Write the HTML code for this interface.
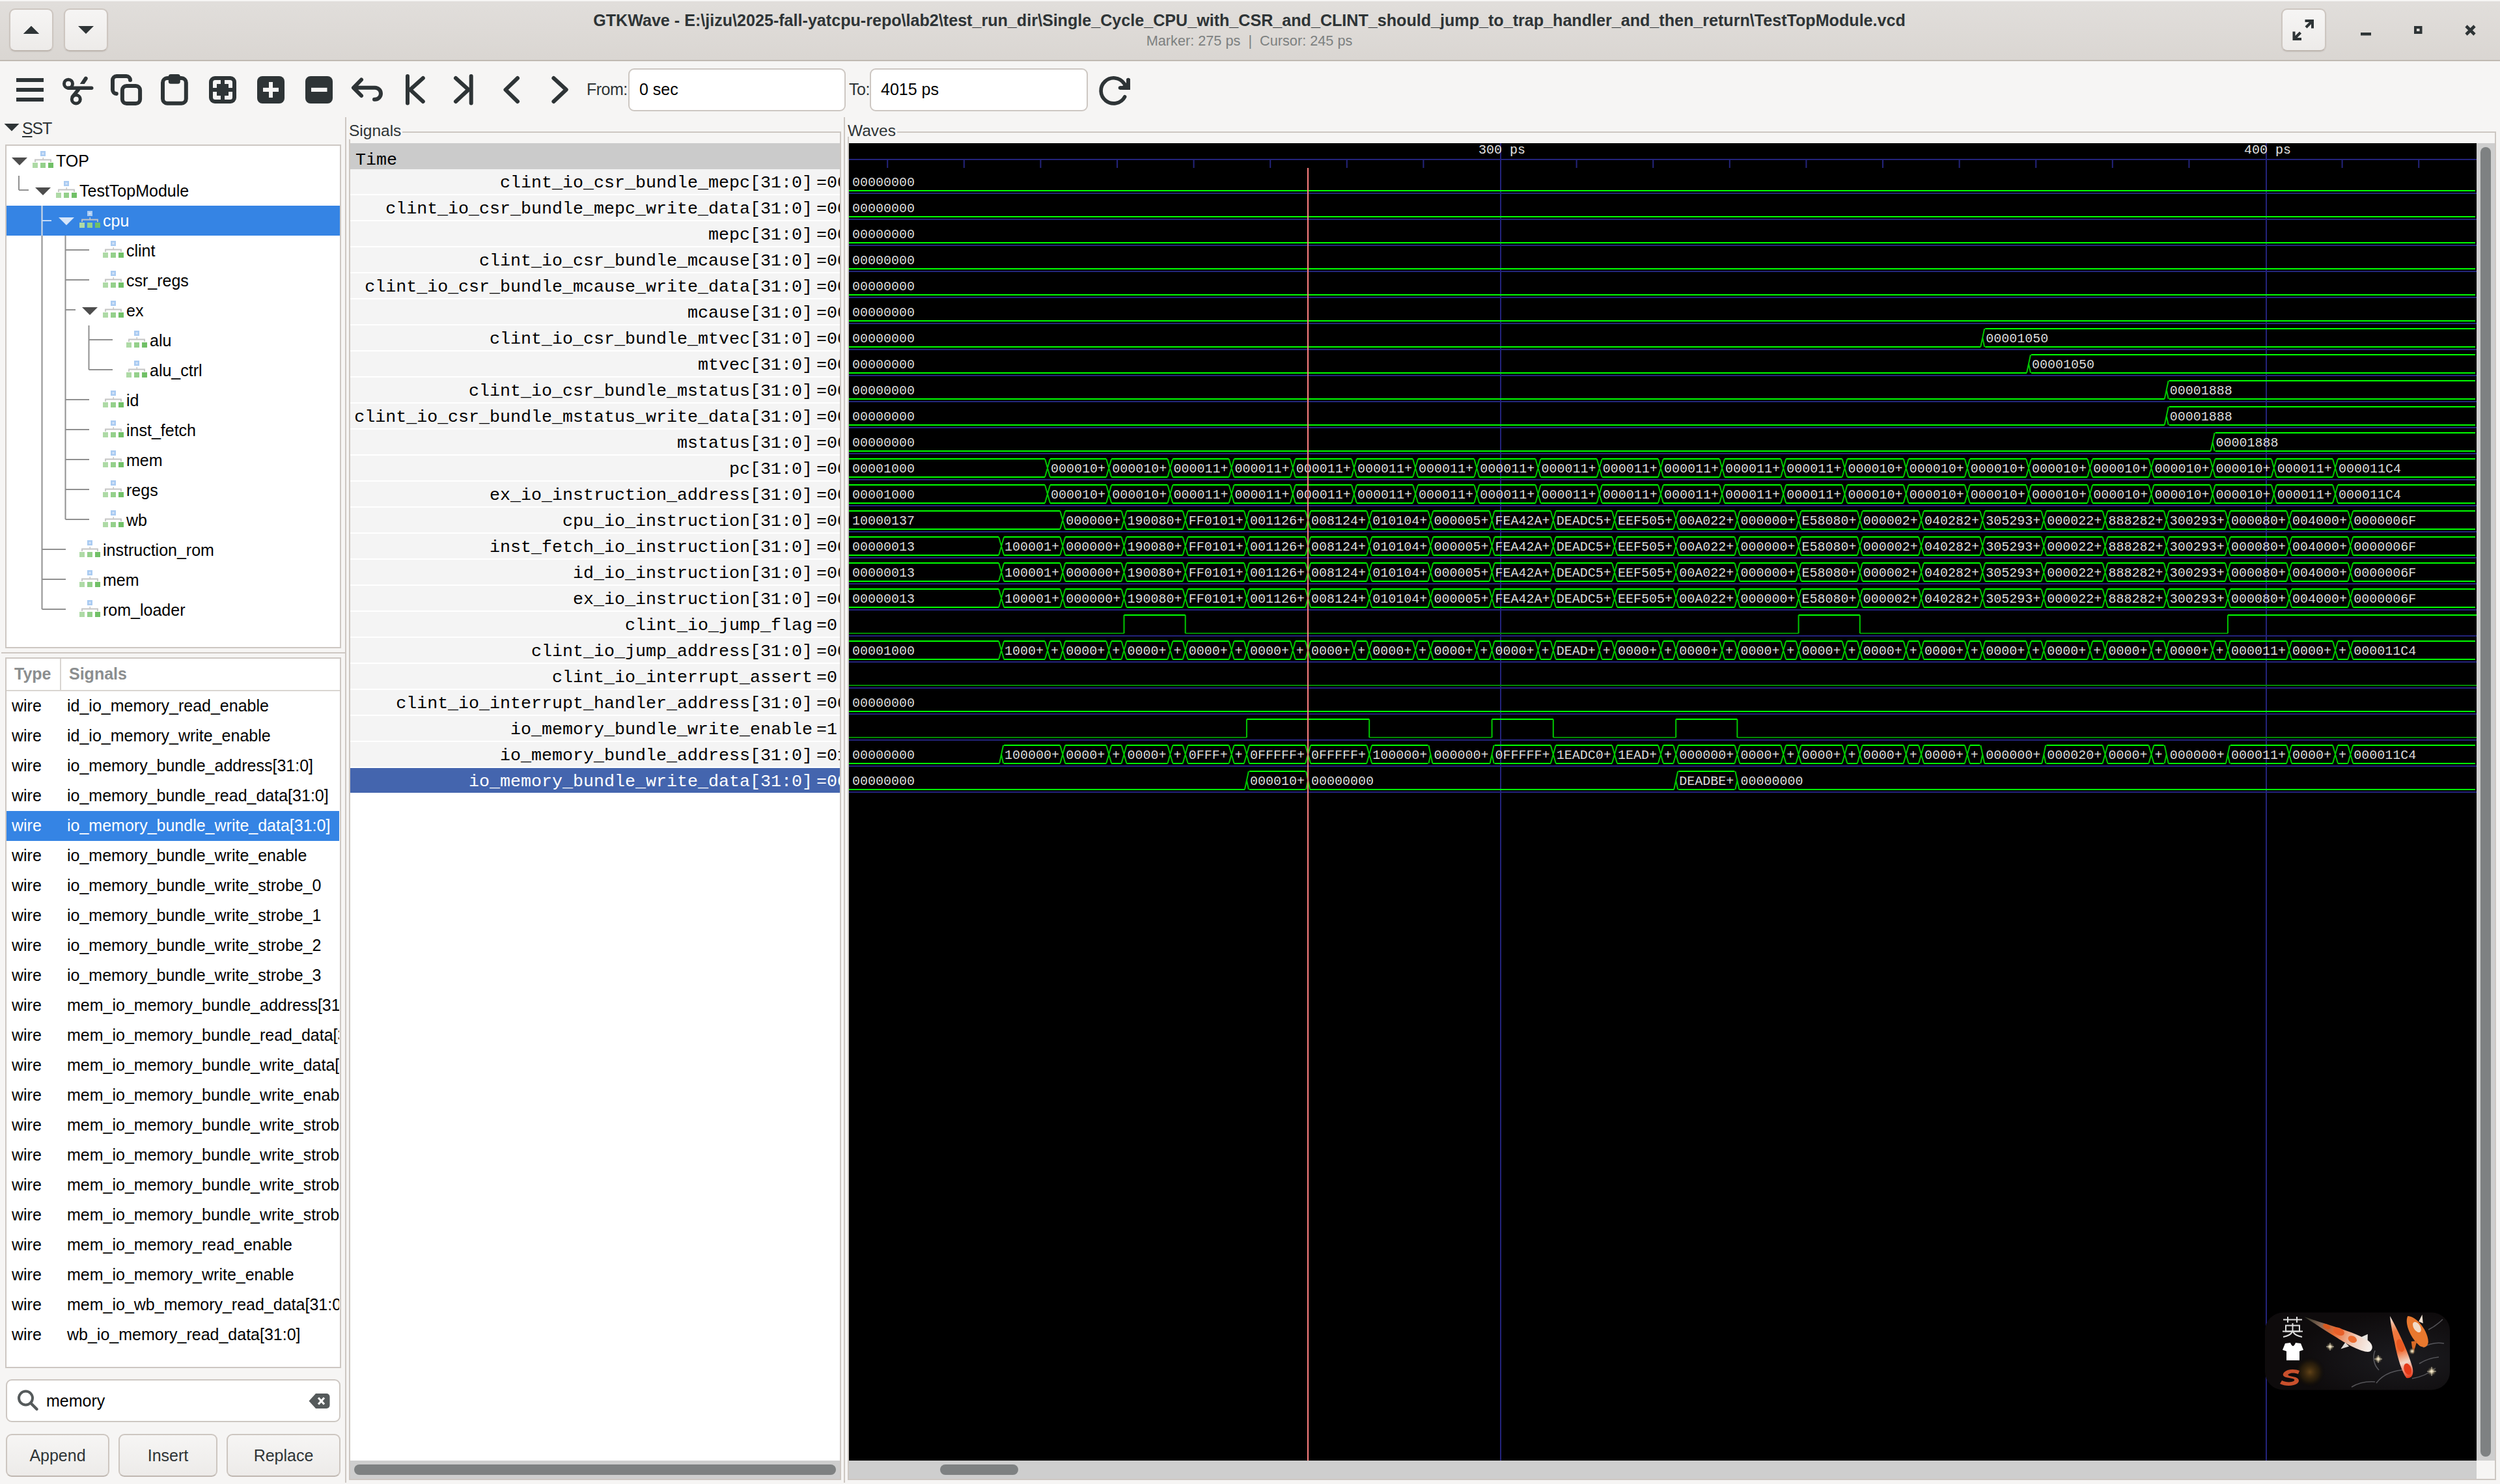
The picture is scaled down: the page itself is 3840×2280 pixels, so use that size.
<!DOCTYPE html>
<html><head><meta charset="utf-8"><title>GTKWave</title>
<style>
html,body{margin:0;padding:0;}
body{width:3840px;height:2280px;position:relative;overflow:hidden;background:#f6f5f4;font-family:"Liberation Sans",sans-serif;}
</style></head><body>
<div style="position:absolute;left:0;top:0;width:3840px;height:2px;background:#f6f5f4"></div>
<div style="position:absolute;left:0;top:2px;width:3840px;height:90px;background:linear-gradient(#e1dedb,#dad6d2)"></div>
<div style="position:absolute;left:0;top:92px;width:3840px;height:2px;background:#c0b9b2"></div>
<div style="position:absolute;left:14px;top:13px;width:64px;height:62px;border:2px solid #cdc6c0;border-bottom-color:#bfb7b0;border-radius:9px;background:linear-gradient(#f6f5f4,#edebe9);box-shadow:0 1px 2px rgba(0,0,0,0.07)"></div><svg style="position:absolute;left:0;top:0" width="200" height="94"><polygon points="36,52 60,52 48,40" fill="#2e3436"/><polygon points="120,40 144,40 132,52" fill="#2e3436"/></svg>
<div style="position:absolute;left:98px;top:13px;width:64px;height:62px;border:2px solid #cdc6c0;border-bottom-color:#bfb7b0;border-radius:9px;background:linear-gradient(#f6f5f4,#edebe9);box-shadow:0 1px 2px rgba(0,0,0,0.07)"></div>
<svg style="position:absolute;left:0;top:0" width="200" height="94"><polygon points="36,52 60,52 48,40" fill="#2e3436"/><polygon points="120,40 144,40 132,52" fill="#2e3436"/></svg>
<div style="position:absolute;left:0;top:16px;width:3838px;text-align:center;font:bold 25.12px/30px 'Liberation Sans',sans-serif;color:#2e3436;white-space:pre">GTKWave - E:\jizu\2025-fall-yatcpu-repo\lab2\test_run_dir\Single_Cycle_CPU_with_CSR_and_CLINT_should_jump_to_trap_handler_and_then_return\TestTopModule.vcd</div>
<div style="position:absolute;left:0;top:50px;width:3838px;text-align:center;font:21.7px/26px 'Liberation Sans',sans-serif;color:#7c8080;white-space:pre">Marker: 275 ps  |  Cursor: 245 ps</div>
<div style="position:absolute;left:3504px;top:13px;width:65px;height:62px;border:2px solid #cdc6c0;border-bottom-color:#bfb7b0;border-radius:9px;background:linear-gradient(#f6f5f4,#edebe9);box-shadow:0 1px 2px rgba(0,0,0,0.07)"></div>
<svg style="position:absolute;left:3480px;top:0" width="360" height="94">
<g fill="#2e3436">
<polygon points="60.5,30 74,30 74,43.5 70,43.5 70,37 63.5,43.5 60.5,40.5 67,34 60.5,34"/>
<polygon points="41.5,62 41.5,48.5 45.5,48.5 45.5,55 52,48.5 55,51.5 48.5,58 55,58 55,62"/>
<rect x="146" y="50" width="16" height="4.5"/>
<path d="M228 40h12.5v12h-12.5z M232 44v4h4.5v-4z" fill-rule="evenodd"/>
</g>
<path d="M308 40l13 13 M321 40l-13 13" stroke="#2e3436" stroke-width="4.6" stroke-linecap="butt"/>
</svg>
<svg style="position:absolute;left:0;top:94px" width="1760" height="90" viewBox="0 94 1760 90">
<g fill="#2e3436">
<rect x="25" y="120" width="42" height="6"/><rect x="25" y="135" width="42" height="6"/><rect x="25" y="150" width="42" height="6"/>
</g>
<g fill="none" stroke="#2e3436" stroke-width="6" stroke-linecap="round" stroke-linejoin="round">
<circle cx="105" cy="128.7" r="6.5" stroke-width="5"/>
<circle cx="116.8" cy="152.5" r="6.5" stroke-width="5"/>
<path d="M105 135.2H140.7" stroke-width="5.5"/>
<path d="M122.7 128.9L129.7 128.9L134.6 121.8A3 3 0 0 0 129.6 118.6Z" fill="#2e3436" stroke="none"/>
<path d="M120.5 137.5L111.5 148.5" stroke-width="5.5"/>
<path d="M178.8 143.9A6 6 0 0 1 173 138V123A6 6 0 0 1 179 117H194A6 6 0 0 1 200 123"/>
<rect x="187.9" y="131.9" width="27.2" height="27.1" rx="6.5"/>
<rect x="250" y="120" width="35.8" height="38.8" rx="7"/>

<path d="M576 134.8a9 9 0 0 1 0 18 M544 134.8H576 M555 122.5L543 134.8L555 147 M576 152.8h-1" />
<path d="M626 117V158.6 M649.8 120L630 137.8L649.8 156"/>
<path d="M723.7 117V158.6 M700 120L719.5 137.8L700 156"/>
<path d="M795 120L776.5 137.8L795 156"/>
<path d="M850.4 120L869.7 137.8L850.4 156"/>
</g>
<g fill="#2e3436">
<rect x="258.8" y="114" width="18" height="14.8" rx="3.5"/>
<rect x="335" y="134.8" width="14" height="6"/>
<rect x="338.5" y="127.5" width="7" height="22"/>
<rect x="395" y="117" width="42" height="42" rx="8"/>
<rect x="469" y="117" width="42" height="42" rx="8"/>
</g>
<rect x="321" y="117" width="42" height="42" rx="9" fill="#2e3436"/>
<g fill="#f6f5f4">
<rect x="404" y="134.8" width="24" height="6.2"/><rect x="413" y="126" width="6" height="24"/>
<rect x="478" y="134.8" width="24.5" height="6.2"/>
<rect x="327" y="123" width="30" height="30" rx="3.5"/>
</g>
<g fill="#2e3436"><rect x="339" y="123" width="6" height="30"/><rect x="327" y="135" width="30" height="6"/><rect x="333" y="129" width="18" height="18"/></g>
<path d="M1726.7 128.4A19.5 19.5 0 1 0 1727.6 148.8" fill="none" stroke="#2e3436" stroke-width="5.6" stroke-linecap="round"/>
<path d="M1733 122.5V135H1720.5" fill="none" stroke="#2e3436" stroke-width="5.6" stroke-linecap="round"/>
<polygon points="1729.5,127.6 1735.8,127.6 1735.8,137.7 1724,137.7 1724,132.1" fill="#2e3436"/>
<rect x="1730.2" y="121" width="5.6" height="16.7" fill="#2e3436"/><rect x="1720" y="132.1" width="15.8" height="5.6" fill="#2e3436"/>
</svg>
<div style="position:absolute;left:901px;top:122px;font:25px/30px 'Liberation Sans',sans-serif;color:#2e3436;letter-spacing:-0.5px">From:</div>
<div style="position:absolute;left:965px;top:105px;width:330px;height:62px;border:2px solid #cdc7c2;border-radius:9px;background:#fff"></div>
<div style="position:absolute;left:982px;top:122px;font:25px/30px 'Liberation Sans',sans-serif;color:#000">0 sec</div>
<div style="position:absolute;left:1304px;top:122px;font:25px/30px 'Liberation Sans',sans-serif;color:#2e3436;letter-spacing:-0.5px">To:</div>
<div style="position:absolute;left:1336px;top:105px;width:331px;height:62px;border:2px solid #cdc7c2;border-radius:9px;background:#fff"></div>
<div style="position:absolute;left:1353px;top:122px;font:25px/30px 'Liberation Sans',sans-serif;color:#000">4015 ps</div>
<svg style="position:absolute;left:0;top:180px" width="40" height="40"><polygon points="6.5,10 29.5,10 18,21.6" fill="#2e3436"/></svg>
<div style="position:absolute;left:34px;top:182px;font:25px/30px 'Liberation Sans',sans-serif;color:#2e3436;letter-spacing:-1.2px"><u style="text-decoration-thickness:2px;text-underline-offset:3px">S</u>ST</div>
<div style="position:absolute;left:8px;top:222px;width:512px;height:770px;border:2px solid #cdc7c2;background:#fff"></div>
<div style="position:absolute;left:10px;top:316px;width:512px;height:46px;background:#3584e4"></div>
<svg style="position:absolute;left:0;top:0" width="530" height="1000">
<rect x="28" y="270" width="2" height="22" fill="#909090"/>
<rect x="29" y="291" width="15" height="2" fill="#909090"/>
<rect x="63.5" y="316" width="2" height="620" fill="#909090"/>
<rect x="64.5" y="338" width="14.5" height="2" fill="#c4dbf7"/>
<rect x="63.5" y="316" width="2" height="46" fill="#c4dbf7"/>
<rect x="64.5" y="843" width="36.5" height="2" fill="#909090"/>
<rect x="64.5" y="889" width="36.5" height="2" fill="#909090"/>
<rect x="64.5" y="935" width="36.5" height="2" fill="#909090"/>
<rect x="99.5" y="362" width="2" height="436" fill="#909090"/>
<rect x="100.5" y="383" width="36.5" height="2" fill="#909090"/>
<rect x="100.5" y="429" width="36.5" height="2" fill="#909090"/>
<rect x="100.5" y="613" width="36.5" height="2" fill="#909090"/>
<rect x="100.5" y="659" width="36.5" height="2" fill="#909090"/>
<rect x="100.5" y="705" width="36.5" height="2" fill="#909090"/>
<rect x="100.5" y="751" width="36.5" height="2" fill="#909090"/>
<rect x="100.5" y="797" width="36.5" height="2" fill="#909090"/>
<rect x="100.5" y="475" width="15.5" height="2" fill="#909090"/>
<rect x="135.5" y="500" width="2" height="68" fill="#909090"/>
<rect x="136.5" y="521" width="36.5" height="2" fill="#909090"/>
<rect x="136.5" y="567" width="36.5" height="2" fill="#909090"/>
<polygon points="18,242 42,242 30,254" fill="#4d4d4d"/>
<g transform="translate(50,232)"><rect x="12" y="0" width="8" height="8" fill="#a9cbf2"/><rect x="14.5" y="2.5" width="3" height="3" fill="#d5e4f8"/><rect x="15.5" y="10" width="1.5" height="3" fill="#c8c8c8"/><path d="M4 17V13.5H28V17" fill="none" stroke="#c4c4c4" stroke-width="1.8"/><rect x="0" y="18" width="8" height="8" fill="#aedaa6"/><rect x="12" y="18" width="8" height="8" fill="#94d08b"/><rect x="24" y="18" width="8" height="8" fill="#71c067"/></g>
<polygon points="54,288 78,288 66,300" fill="#4d4d4d"/>
<g transform="translate(86,278)"><rect x="12" y="0" width="8" height="8" fill="#a9cbf2"/><rect x="14.5" y="2.5" width="3" height="3" fill="#d5e4f8"/><rect x="15.5" y="10" width="1.5" height="3" fill="#c8c8c8"/><path d="M4 17V13.5H28V17" fill="none" stroke="#c4c4c4" stroke-width="1.8"/><rect x="0" y="18" width="8" height="8" fill="#aedaa6"/><rect x="12" y="18" width="8" height="8" fill="#94d08b"/><rect x="24" y="18" width="8" height="8" fill="#71c067"/></g>
<polygon points="90,334 114,334 102,346" fill="#d6e6fa"/>
<g transform="translate(122,324)"><rect x="12" y="0" width="8" height="8" fill="#a9cbf2"/><rect x="14.5" y="2.5" width="3" height="3" fill="#d5e4f8"/><rect x="15.5" y="10" width="1.5" height="3" fill="#c8c8c8"/><path d="M4 17V13.5H28V17" fill="none" stroke="#c4c4c4" stroke-width="1.8"/><rect x="0" y="18" width="8" height="8" fill="#aedaa6"/><rect x="12" y="18" width="8" height="8" fill="#94d08b"/><rect x="24" y="18" width="8" height="8" fill="#71c067"/></g>
<g transform="translate(158,370)"><rect x="12" y="0" width="8" height="8" fill="#a9cbf2"/><rect x="14.5" y="2.5" width="3" height="3" fill="#d5e4f8"/><rect x="15.5" y="10" width="1.5" height="3" fill="#c8c8c8"/><path d="M4 17V13.5H28V17" fill="none" stroke="#c4c4c4" stroke-width="1.8"/><rect x="0" y="18" width="8" height="8" fill="#aedaa6"/><rect x="12" y="18" width="8" height="8" fill="#94d08b"/><rect x="24" y="18" width="8" height="8" fill="#71c067"/></g>
<g transform="translate(158,416)"><rect x="12" y="0" width="8" height="8" fill="#a9cbf2"/><rect x="14.5" y="2.5" width="3" height="3" fill="#d5e4f8"/><rect x="15.5" y="10" width="1.5" height="3" fill="#c8c8c8"/><path d="M4 17V13.5H28V17" fill="none" stroke="#c4c4c4" stroke-width="1.8"/><rect x="0" y="18" width="8" height="8" fill="#aedaa6"/><rect x="12" y="18" width="8" height="8" fill="#94d08b"/><rect x="24" y="18" width="8" height="8" fill="#71c067"/></g>
<polygon points="126,472 150,472 138,484" fill="#4d4d4d"/>
<g transform="translate(158,462)"><rect x="12" y="0" width="8" height="8" fill="#a9cbf2"/><rect x="14.5" y="2.5" width="3" height="3" fill="#d5e4f8"/><rect x="15.5" y="10" width="1.5" height="3" fill="#c8c8c8"/><path d="M4 17V13.5H28V17" fill="none" stroke="#c4c4c4" stroke-width="1.8"/><rect x="0" y="18" width="8" height="8" fill="#aedaa6"/><rect x="12" y="18" width="8" height="8" fill="#94d08b"/><rect x="24" y="18" width="8" height="8" fill="#71c067"/></g>
<g transform="translate(194,508)"><rect x="12" y="0" width="8" height="8" fill="#a9cbf2"/><rect x="14.5" y="2.5" width="3" height="3" fill="#d5e4f8"/><rect x="15.5" y="10" width="1.5" height="3" fill="#c8c8c8"/><path d="M4 17V13.5H28V17" fill="none" stroke="#c4c4c4" stroke-width="1.8"/><rect x="0" y="18" width="8" height="8" fill="#aedaa6"/><rect x="12" y="18" width="8" height="8" fill="#94d08b"/><rect x="24" y="18" width="8" height="8" fill="#71c067"/></g>
<g transform="translate(194,554)"><rect x="12" y="0" width="8" height="8" fill="#a9cbf2"/><rect x="14.5" y="2.5" width="3" height="3" fill="#d5e4f8"/><rect x="15.5" y="10" width="1.5" height="3" fill="#c8c8c8"/><path d="M4 17V13.5H28V17" fill="none" stroke="#c4c4c4" stroke-width="1.8"/><rect x="0" y="18" width="8" height="8" fill="#aedaa6"/><rect x="12" y="18" width="8" height="8" fill="#94d08b"/><rect x="24" y="18" width="8" height="8" fill="#71c067"/></g>
<g transform="translate(158,600)"><rect x="12" y="0" width="8" height="8" fill="#a9cbf2"/><rect x="14.5" y="2.5" width="3" height="3" fill="#d5e4f8"/><rect x="15.5" y="10" width="1.5" height="3" fill="#c8c8c8"/><path d="M4 17V13.5H28V17" fill="none" stroke="#c4c4c4" stroke-width="1.8"/><rect x="0" y="18" width="8" height="8" fill="#aedaa6"/><rect x="12" y="18" width="8" height="8" fill="#94d08b"/><rect x="24" y="18" width="8" height="8" fill="#71c067"/></g>
<g transform="translate(158,646)"><rect x="12" y="0" width="8" height="8" fill="#a9cbf2"/><rect x="14.5" y="2.5" width="3" height="3" fill="#d5e4f8"/><rect x="15.5" y="10" width="1.5" height="3" fill="#c8c8c8"/><path d="M4 17V13.5H28V17" fill="none" stroke="#c4c4c4" stroke-width="1.8"/><rect x="0" y="18" width="8" height="8" fill="#aedaa6"/><rect x="12" y="18" width="8" height="8" fill="#94d08b"/><rect x="24" y="18" width="8" height="8" fill="#71c067"/></g>
<g transform="translate(158,692)"><rect x="12" y="0" width="8" height="8" fill="#a9cbf2"/><rect x="14.5" y="2.5" width="3" height="3" fill="#d5e4f8"/><rect x="15.5" y="10" width="1.5" height="3" fill="#c8c8c8"/><path d="M4 17V13.5H28V17" fill="none" stroke="#c4c4c4" stroke-width="1.8"/><rect x="0" y="18" width="8" height="8" fill="#aedaa6"/><rect x="12" y="18" width="8" height="8" fill="#94d08b"/><rect x="24" y="18" width="8" height="8" fill="#71c067"/></g>
<g transform="translate(158,738)"><rect x="12" y="0" width="8" height="8" fill="#a9cbf2"/><rect x="14.5" y="2.5" width="3" height="3" fill="#d5e4f8"/><rect x="15.5" y="10" width="1.5" height="3" fill="#c8c8c8"/><path d="M4 17V13.5H28V17" fill="none" stroke="#c4c4c4" stroke-width="1.8"/><rect x="0" y="18" width="8" height="8" fill="#aedaa6"/><rect x="12" y="18" width="8" height="8" fill="#94d08b"/><rect x="24" y="18" width="8" height="8" fill="#71c067"/></g>
<g transform="translate(158,784)"><rect x="12" y="0" width="8" height="8" fill="#a9cbf2"/><rect x="14.5" y="2.5" width="3" height="3" fill="#d5e4f8"/><rect x="15.5" y="10" width="1.5" height="3" fill="#c8c8c8"/><path d="M4 17V13.5H28V17" fill="none" stroke="#c4c4c4" stroke-width="1.8"/><rect x="0" y="18" width="8" height="8" fill="#aedaa6"/><rect x="12" y="18" width="8" height="8" fill="#94d08b"/><rect x="24" y="18" width="8" height="8" fill="#71c067"/></g>
<g transform="translate(122,830)"><rect x="12" y="0" width="8" height="8" fill="#a9cbf2"/><rect x="14.5" y="2.5" width="3" height="3" fill="#d5e4f8"/><rect x="15.5" y="10" width="1.5" height="3" fill="#c8c8c8"/><path d="M4 17V13.5H28V17" fill="none" stroke="#c4c4c4" stroke-width="1.8"/><rect x="0" y="18" width="8" height="8" fill="#aedaa6"/><rect x="12" y="18" width="8" height="8" fill="#94d08b"/><rect x="24" y="18" width="8" height="8" fill="#71c067"/></g>
<g transform="translate(122,876)"><rect x="12" y="0" width="8" height="8" fill="#a9cbf2"/><rect x="14.5" y="2.5" width="3" height="3" fill="#d5e4f8"/><rect x="15.5" y="10" width="1.5" height="3" fill="#c8c8c8"/><path d="M4 17V13.5H28V17" fill="none" stroke="#c4c4c4" stroke-width="1.8"/><rect x="0" y="18" width="8" height="8" fill="#aedaa6"/><rect x="12" y="18" width="8" height="8" fill="#94d08b"/><rect x="24" y="18" width="8" height="8" fill="#71c067"/></g>
<g transform="translate(122,922)"><rect x="12" y="0" width="8" height="8" fill="#a9cbf2"/><rect x="14.5" y="2.5" width="3" height="3" fill="#d5e4f8"/><rect x="15.5" y="10" width="1.5" height="3" fill="#c8c8c8"/><path d="M4 17V13.5H28V17" fill="none" stroke="#c4c4c4" stroke-width="1.8"/><rect x="0" y="18" width="8" height="8" fill="#aedaa6"/><rect x="12" y="18" width="8" height="8" fill="#94d08b"/><rect x="24" y="18" width="8" height="8" fill="#71c067"/></g>
</svg>
<div style="position:absolute;left:86px;top:232px;font:25px/30px 'Liberation Sans',sans-serif;color:#000000;white-space:pre">TOP</div>
<div style="position:absolute;left:122px;top:278px;font:25px/30px 'Liberation Sans',sans-serif;color:#000000;white-space:pre">TestTopModule</div>
<div style="position:absolute;left:158px;top:324px;font:25px/30px 'Liberation Sans',sans-serif;color:#ffffff;white-space:pre">cpu</div>
<div style="position:absolute;left:194px;top:370px;font:25px/30px 'Liberation Sans',sans-serif;color:#000000;white-space:pre">clint</div>
<div style="position:absolute;left:194px;top:416px;font:25px/30px 'Liberation Sans',sans-serif;color:#000000;white-space:pre">csr_regs</div>
<div style="position:absolute;left:194px;top:462px;font:25px/30px 'Liberation Sans',sans-serif;color:#000000;white-space:pre">ex</div>
<div style="position:absolute;left:230px;top:508px;font:25px/30px 'Liberation Sans',sans-serif;color:#000000;white-space:pre">alu</div>
<div style="position:absolute;left:230px;top:554px;font:25px/30px 'Liberation Sans',sans-serif;color:#000000;white-space:pre">alu_ctrl</div>
<div style="position:absolute;left:194px;top:600px;font:25px/30px 'Liberation Sans',sans-serif;color:#000000;white-space:pre">id</div>
<div style="position:absolute;left:194px;top:646px;font:25px/30px 'Liberation Sans',sans-serif;color:#000000;white-space:pre">inst_fetch</div>
<div style="position:absolute;left:194px;top:692px;font:25px/30px 'Liberation Sans',sans-serif;color:#000000;white-space:pre">mem</div>
<div style="position:absolute;left:194px;top:738px;font:25px/30px 'Liberation Sans',sans-serif;color:#000000;white-space:pre">regs</div>
<div style="position:absolute;left:194px;top:784px;font:25px/30px 'Liberation Sans',sans-serif;color:#000000;white-space:pre">wb</div>
<div style="position:absolute;left:158px;top:830px;font:25px/30px 'Liberation Sans',sans-serif;color:#000000;white-space:pre">instruction_rom</div>
<div style="position:absolute;left:158px;top:876px;font:25px/30px 'Liberation Sans',sans-serif;color:#000000;white-space:pre">mem</div>
<div style="position:absolute;left:158px;top:922px;font:25px/30px 'Liberation Sans',sans-serif;color:#000000;white-space:pre">rom_loader</div>
<div style="position:absolute;left:2px;top:1002px;width:528px;height:2px;background:#cdc7c2"></div>
<div style="position:absolute;left:8px;top:1010px;width:512px;height:1088px;border:2px solid #cdc7c2;background:#fff"></div>
<div style="position:absolute;left:92px;top:1012px;width:2px;height:48px;background:#d9d5d1"></div>
<div style="position:absolute;left:10px;top:1060px;width:512px;height:2px;background:#d9d5d1"></div>
<div style="position:absolute;left:22px;top:1020px;font:bold 25px/30px 'Liberation Sans',sans-serif;color:#8b8e8f">Type</div>
<div style="position:absolute;left:106px;top:1020px;font:bold 25px/30px 'Liberation Sans',sans-serif;color:#8b8e8f">Signals</div>
<div style="position:absolute;left:10px;top:1062px;width:511px;height:1036px;overflow:hidden">
<div style="position:absolute;left:0;top:184px;width:511px;height:46px;background:#3584e4"></div>
<div style="position:absolute;left:8px;top:7px;font:25px/30px 'Liberation Sans',sans-serif;color:#000000;white-space:pre">wire</div>
<div style="position:absolute;left:93px;top:7px;font:25px/30px 'Liberation Sans',sans-serif;color:#000000;white-space:pre">id_io_memory_read_enable</div>
<div style="position:absolute;left:8px;top:53px;font:25px/30px 'Liberation Sans',sans-serif;color:#000000;white-space:pre">wire</div>
<div style="position:absolute;left:93px;top:53px;font:25px/30px 'Liberation Sans',sans-serif;color:#000000;white-space:pre">id_io_memory_write_enable</div>
<div style="position:absolute;left:8px;top:99px;font:25px/30px 'Liberation Sans',sans-serif;color:#000000;white-space:pre">wire</div>
<div style="position:absolute;left:93px;top:99px;font:25px/30px 'Liberation Sans',sans-serif;color:#000000;white-space:pre">io_memory_bundle_address[31:0]</div>
<div style="position:absolute;left:8px;top:145px;font:25px/30px 'Liberation Sans',sans-serif;color:#000000;white-space:pre">wire</div>
<div style="position:absolute;left:93px;top:145px;font:25px/30px 'Liberation Sans',sans-serif;color:#000000;white-space:pre">io_memory_bundle_read_data[31:0]</div>
<div style="position:absolute;left:8px;top:191px;font:25px/30px 'Liberation Sans',sans-serif;color:#ffffff;white-space:pre">wire</div>
<div style="position:absolute;left:93px;top:191px;font:25px/30px 'Liberation Sans',sans-serif;color:#ffffff;white-space:pre">io_memory_bundle_write_data[31:0]</div>
<div style="position:absolute;left:8px;top:237px;font:25px/30px 'Liberation Sans',sans-serif;color:#000000;white-space:pre">wire</div>
<div style="position:absolute;left:93px;top:237px;font:25px/30px 'Liberation Sans',sans-serif;color:#000000;white-space:pre">io_memory_bundle_write_enable</div>
<div style="position:absolute;left:8px;top:283px;font:25px/30px 'Liberation Sans',sans-serif;color:#000000;white-space:pre">wire</div>
<div style="position:absolute;left:93px;top:283px;font:25px/30px 'Liberation Sans',sans-serif;color:#000000;white-space:pre">io_memory_bundle_write_strobe_0</div>
<div style="position:absolute;left:8px;top:329px;font:25px/30px 'Liberation Sans',sans-serif;color:#000000;white-space:pre">wire</div>
<div style="position:absolute;left:93px;top:329px;font:25px/30px 'Liberation Sans',sans-serif;color:#000000;white-space:pre">io_memory_bundle_write_strobe_1</div>
<div style="position:absolute;left:8px;top:375px;font:25px/30px 'Liberation Sans',sans-serif;color:#000000;white-space:pre">wire</div>
<div style="position:absolute;left:93px;top:375px;font:25px/30px 'Liberation Sans',sans-serif;color:#000000;white-space:pre">io_memory_bundle_write_strobe_2</div>
<div style="position:absolute;left:8px;top:421px;font:25px/30px 'Liberation Sans',sans-serif;color:#000000;white-space:pre">wire</div>
<div style="position:absolute;left:93px;top:421px;font:25px/30px 'Liberation Sans',sans-serif;color:#000000;white-space:pre">io_memory_bundle_write_strobe_3</div>
<div style="position:absolute;left:8px;top:467px;font:25px/30px 'Liberation Sans',sans-serif;color:#000000;white-space:pre">wire</div>
<div style="position:absolute;left:93px;top:467px;font:25px/30px 'Liberation Sans',sans-serif;color:#000000;white-space:pre">mem_io_memory_bundle_address[31:0]</div>
<div style="position:absolute;left:8px;top:513px;font:25px/30px 'Liberation Sans',sans-serif;color:#000000;white-space:pre">wire</div>
<div style="position:absolute;left:93px;top:513px;font:25px/30px 'Liberation Sans',sans-serif;color:#000000;white-space:pre">mem_io_memory_bundle_read_data[31:0]</div>
<div style="position:absolute;left:8px;top:559px;font:25px/30px 'Liberation Sans',sans-serif;color:#000000;white-space:pre">wire</div>
<div style="position:absolute;left:93px;top:559px;font:25px/30px 'Liberation Sans',sans-serif;color:#000000;white-space:pre">mem_io_memory_bundle_write_data[31:0]</div>
<div style="position:absolute;left:8px;top:605px;font:25px/30px 'Liberation Sans',sans-serif;color:#000000;white-space:pre">wire</div>
<div style="position:absolute;left:93px;top:605px;font:25px/30px 'Liberation Sans',sans-serif;color:#000000;white-space:pre">mem_io_memory_bundle_write_enable</div>
<div style="position:absolute;left:8px;top:651px;font:25px/30px 'Liberation Sans',sans-serif;color:#000000;white-space:pre">wire</div>
<div style="position:absolute;left:93px;top:651px;font:25px/30px 'Liberation Sans',sans-serif;color:#000000;white-space:pre">mem_io_memory_bundle_write_strobe_0</div>
<div style="position:absolute;left:8px;top:697px;font:25px/30px 'Liberation Sans',sans-serif;color:#000000;white-space:pre">wire</div>
<div style="position:absolute;left:93px;top:697px;font:25px/30px 'Liberation Sans',sans-serif;color:#000000;white-space:pre">mem_io_memory_bundle_write_strobe_1</div>
<div style="position:absolute;left:8px;top:743px;font:25px/30px 'Liberation Sans',sans-serif;color:#000000;white-space:pre">wire</div>
<div style="position:absolute;left:93px;top:743px;font:25px/30px 'Liberation Sans',sans-serif;color:#000000;white-space:pre">mem_io_memory_bundle_write_strobe_2</div>
<div style="position:absolute;left:8px;top:789px;font:25px/30px 'Liberation Sans',sans-serif;color:#000000;white-space:pre">wire</div>
<div style="position:absolute;left:93px;top:789px;font:25px/30px 'Liberation Sans',sans-serif;color:#000000;white-space:pre">mem_io_memory_bundle_write_strobe_3</div>
<div style="position:absolute;left:8px;top:835px;font:25px/30px 'Liberation Sans',sans-serif;color:#000000;white-space:pre">wire</div>
<div style="position:absolute;left:93px;top:835px;font:25px/30px 'Liberation Sans',sans-serif;color:#000000;white-space:pre">mem_io_memory_read_enable</div>
<div style="position:absolute;left:8px;top:881px;font:25px/30px 'Liberation Sans',sans-serif;color:#000000;white-space:pre">wire</div>
<div style="position:absolute;left:93px;top:881px;font:25px/30px 'Liberation Sans',sans-serif;color:#000000;white-space:pre">mem_io_memory_write_enable</div>
<div style="position:absolute;left:8px;top:927px;font:25px/30px 'Liberation Sans',sans-serif;color:#000000;white-space:pre">wire</div>
<div style="position:absolute;left:93px;top:927px;font:25px/30px 'Liberation Sans',sans-serif;color:#000000;white-space:pre">mem_io_wb_memory_read_data[31:0]</div>
<div style="position:absolute;left:8px;top:973px;font:25px/30px 'Liberation Sans',sans-serif;color:#000000;white-space:pre">wire</div>
<div style="position:absolute;left:93px;top:973px;font:25px/30px 'Liberation Sans',sans-serif;color:#000000;white-space:pre">wb_io_memory_read_data[31:0]</div>
</div>
<div style="position:absolute;left:9px;top:2119px;width:510px;height:62px;border:2px solid #cdc7c2;border-radius:9px;background:#fff"></div>
<svg style="position:absolute;left:0;top:2100px" width="530" height="100">
<circle cx="39.5" cy="48" r="10.5" fill="none" stroke="#555a5b" stroke-width="4"/>
<path d="M47 55.5L56.5 65" stroke="#555a5b" stroke-width="4.5" stroke-linecap="round"/>
<path d="M485 41h16.5a5 5 0 0 1 5 5v13a5 5 0 0 1 -5 5h-16.5l-10.5 -11.5z" fill="#555a5b"/>
<path d="M489 47.5l9 10 M498 47.5l-9 10" stroke="#fff" stroke-width="3.2"/>
</svg>
<div style="position:absolute;left:71px;top:2137px;font:25px/30px 'Liberation Sans',sans-serif;color:#000">memory</div>
<div style="position:absolute;left:9px;top:2203px;width:155px;height:62px;border:2px solid #cdc6c0;border-bottom-color:#bfb7b0;border-radius:9px;background:linear-gradient(#f6f5f4,#edebe9);font:25px/62px 'Liberation Sans',sans-serif;color:#2e3436;text-align:center">Append</div>
<div style="position:absolute;left:182px;top:2203px;width:148px;height:62px;border:2px solid #cdc6c0;border-bottom-color:#bfb7b0;border-radius:9px;background:linear-gradient(#f6f5f4,#edebe9);font:25px/62px 'Liberation Sans',sans-serif;color:#2e3436;text-align:center">Insert</div>
<div style="position:absolute;left:348px;top:2203px;width:171px;height:62px;border:2px solid #cdc6c0;border-bottom-color:#bfb7b0;border-radius:9px;background:linear-gradient(#f6f5f4,#edebe9);font:25px/62px 'Liberation Sans',sans-serif;color:#2e3436;text-align:center">Replace</div>
<div style="position:absolute;left:530px;top:180px;width:2px;height:2098px;background:#cdc7c2"></div>
<div style="position:absolute;left:536px;top:186px;font:24.5px/30px 'Liberation Sans',sans-serif;color:#2e3436">Signals</div>
<div style="position:absolute;left:618px;top:202px;width:674px;height:2px;background:#cdc7c2"></div>
<div style="position:absolute;left:1290px;top:202px;width:2px;height:2072px;background:#cdc7c2"></div>
<div style="position:absolute;left:536px;top:214px;width:2px;height:2060px;background:#cdc7c2"></div>
<div style="position:absolute;left:536px;top:2272px;width:756px;height:2px;background:#cdc7c2"></div>
<div style="position:absolute;left:538px;top:220px;width:752px;height:2024px;background:#fff;overflow:hidden">
<div style="position:absolute;left:0;top:0;width:752px;height:40px;background:#cbcbcb"></div>
<div style="position:absolute;left:8px;top:11px;font:26.67px/30px 'Liberation Mono',monospace;color:#000;white-space:pre">Time</div>
<div style="position:absolute;left:0;top:40px;width:752px;height:38px;background:#f4f4f4"></div>
<div style="position:absolute;right:42px;top:46px;font:26.67px/30px 'Liberation Mono',monospace;color:#000000;white-space:pre">clint_io_csr_bundle_mepc[31:0]</div>
<div style="position:absolute;left:716px;top:46px;font:26.67px/30px 'Liberation Mono',monospace;color:#000000;white-space:pre">=00000000</div>
<div style="position:absolute;left:0;top:80px;width:752px;height:38px;background:#f4f4f4"></div>
<div style="position:absolute;right:42px;top:86px;font:26.67px/30px 'Liberation Mono',monospace;color:#000000;white-space:pre">clint_io_csr_bundle_mepc_write_data[31:0]</div>
<div style="position:absolute;left:716px;top:86px;font:26.67px/30px 'Liberation Mono',monospace;color:#000000;white-space:pre">=00000000</div>
<div style="position:absolute;left:0;top:120px;width:752px;height:38px;background:#f4f4f4"></div>
<div style="position:absolute;right:42px;top:126px;font:26.67px/30px 'Liberation Mono',monospace;color:#000000;white-space:pre">mepc[31:0]</div>
<div style="position:absolute;left:716px;top:126px;font:26.67px/30px 'Liberation Mono',monospace;color:#000000;white-space:pre">=00000000</div>
<div style="position:absolute;left:0;top:160px;width:752px;height:38px;background:#f4f4f4"></div>
<div style="position:absolute;right:42px;top:166px;font:26.67px/30px 'Liberation Mono',monospace;color:#000000;white-space:pre">clint_io_csr_bundle_mcause[31:0]</div>
<div style="position:absolute;left:716px;top:166px;font:26.67px/30px 'Liberation Mono',monospace;color:#000000;white-space:pre">=00000000</div>
<div style="position:absolute;left:0;top:200px;width:752px;height:38px;background:#f4f4f4"></div>
<div style="position:absolute;right:42px;top:206px;font:26.67px/30px 'Liberation Mono',monospace;color:#000000;white-space:pre">clint_io_csr_bundle_mcause_write_data[31:0]</div>
<div style="position:absolute;left:716px;top:206px;font:26.67px/30px 'Liberation Mono',monospace;color:#000000;white-space:pre">=00000000</div>
<div style="position:absolute;left:0;top:240px;width:752px;height:38px;background:#f4f4f4"></div>
<div style="position:absolute;right:42px;top:246px;font:26.67px/30px 'Liberation Mono',monospace;color:#000000;white-space:pre">mcause[31:0]</div>
<div style="position:absolute;left:716px;top:246px;font:26.67px/30px 'Liberation Mono',monospace;color:#000000;white-space:pre">=00000000</div>
<div style="position:absolute;left:0;top:280px;width:752px;height:38px;background:#f4f4f4"></div>
<div style="position:absolute;right:42px;top:286px;font:26.67px/30px 'Liberation Mono',monospace;color:#000000;white-space:pre">clint_io_csr_bundle_mtvec[31:0]</div>
<div style="position:absolute;left:716px;top:286px;font:26.67px/30px 'Liberation Mono',monospace;color:#000000;white-space:pre">=00000000</div>
<div style="position:absolute;left:0;top:320px;width:752px;height:38px;background:#f4f4f4"></div>
<div style="position:absolute;right:42px;top:326px;font:26.67px/30px 'Liberation Mono',monospace;color:#000000;white-space:pre">mtvec[31:0]</div>
<div style="position:absolute;left:716px;top:326px;font:26.67px/30px 'Liberation Mono',monospace;color:#000000;white-space:pre">=00000000</div>
<div style="position:absolute;left:0;top:360px;width:752px;height:38px;background:#f4f4f4"></div>
<div style="position:absolute;right:42px;top:366px;font:26.67px/30px 'Liberation Mono',monospace;color:#000000;white-space:pre">clint_io_csr_bundle_mstatus[31:0]</div>
<div style="position:absolute;left:716px;top:366px;font:26.67px/30px 'Liberation Mono',monospace;color:#000000;white-space:pre">=00000000</div>
<div style="position:absolute;left:0;top:400px;width:752px;height:38px;background:#f4f4f4"></div>
<div style="position:absolute;right:42px;top:406px;font:26.67px/30px 'Liberation Mono',monospace;color:#000000;white-space:pre">clint_io_csr_bundle_mstatus_write_data[31:0]</div>
<div style="position:absolute;left:716px;top:406px;font:26.67px/30px 'Liberation Mono',monospace;color:#000000;white-space:pre">=00000000</div>
<div style="position:absolute;left:0;top:440px;width:752px;height:38px;background:#f4f4f4"></div>
<div style="position:absolute;right:42px;top:446px;font:26.67px/30px 'Liberation Mono',monospace;color:#000000;white-space:pre">mstatus[31:0]</div>
<div style="position:absolute;left:716px;top:446px;font:26.67px/30px 'Liberation Mono',monospace;color:#000000;white-space:pre">=00000000</div>
<div style="position:absolute;left:0;top:480px;width:752px;height:38px;background:#f4f4f4"></div>
<div style="position:absolute;right:42px;top:486px;font:26.67px/30px 'Liberation Mono',monospace;color:#000000;white-space:pre">pc[31:0]</div>
<div style="position:absolute;left:716px;top:486px;font:26.67px/30px 'Liberation Mono',monospace;color:#000000;white-space:pre">=00001000</div>
<div style="position:absolute;left:0;top:520px;width:752px;height:38px;background:#f4f4f4"></div>
<div style="position:absolute;right:42px;top:526px;font:26.67px/30px 'Liberation Mono',monospace;color:#000000;white-space:pre">ex_io_instruction_address[31:0]</div>
<div style="position:absolute;left:716px;top:526px;font:26.67px/30px 'Liberation Mono',monospace;color:#000000;white-space:pre">=00001000</div>
<div style="position:absolute;left:0;top:560px;width:752px;height:38px;background:#f4f4f4"></div>
<div style="position:absolute;right:42px;top:566px;font:26.67px/30px 'Liberation Mono',monospace;color:#000000;white-space:pre">cpu_io_instruction[31:0]</div>
<div style="position:absolute;left:716px;top:566px;font:26.67px/30px 'Liberation Mono',monospace;color:#000000;white-space:pre">=00000000</div>
<div style="position:absolute;left:0;top:600px;width:752px;height:38px;background:#f4f4f4"></div>
<div style="position:absolute;right:42px;top:606px;font:26.67px/30px 'Liberation Mono',monospace;color:#000000;white-space:pre">inst_fetch_io_instruction[31:0]</div>
<div style="position:absolute;left:716px;top:606px;font:26.67px/30px 'Liberation Mono',monospace;color:#000000;white-space:pre">=00000000</div>
<div style="position:absolute;left:0;top:640px;width:752px;height:38px;background:#f4f4f4"></div>
<div style="position:absolute;right:42px;top:646px;font:26.67px/30px 'Liberation Mono',monospace;color:#000000;white-space:pre">id_io_instruction[31:0]</div>
<div style="position:absolute;left:716px;top:646px;font:26.67px/30px 'Liberation Mono',monospace;color:#000000;white-space:pre">=00000000</div>
<div style="position:absolute;left:0;top:680px;width:752px;height:38px;background:#f4f4f4"></div>
<div style="position:absolute;right:42px;top:686px;font:26.67px/30px 'Liberation Mono',monospace;color:#000000;white-space:pre">ex_io_instruction[31:0]</div>
<div style="position:absolute;left:716px;top:686px;font:26.67px/30px 'Liberation Mono',monospace;color:#000000;white-space:pre">=00000000</div>
<div style="position:absolute;left:0;top:720px;width:752px;height:38px;background:#f4f4f4"></div>
<div style="position:absolute;right:42px;top:726px;font:26.67px/30px 'Liberation Mono',monospace;color:#000000;white-space:pre">clint_io_jump_flag</div>
<div style="position:absolute;left:716px;top:726px;font:26.67px/30px 'Liberation Mono',monospace;color:#000000;white-space:pre">=0</div>
<div style="position:absolute;left:0;top:760px;width:752px;height:38px;background:#f4f4f4"></div>
<div style="position:absolute;right:42px;top:766px;font:26.67px/30px 'Liberation Mono',monospace;color:#000000;white-space:pre">clint_io_jump_address[31:0]</div>
<div style="position:absolute;left:716px;top:766px;font:26.67px/30px 'Liberation Mono',monospace;color:#000000;white-space:pre">=00000000</div>
<div style="position:absolute;left:0;top:800px;width:752px;height:38px;background:#f4f4f4"></div>
<div style="position:absolute;right:42px;top:806px;font:26.67px/30px 'Liberation Mono',monospace;color:#000000;white-space:pre">clint_io_interrupt_assert</div>
<div style="position:absolute;left:716px;top:806px;font:26.67px/30px 'Liberation Mono',monospace;color:#000000;white-space:pre">=0</div>
<div style="position:absolute;left:0;top:840px;width:752px;height:38px;background:#f4f4f4"></div>
<div style="position:absolute;right:42px;top:846px;font:26.67px/30px 'Liberation Mono',monospace;color:#000000;white-space:pre">clint_io_interrupt_handler_address[31:0]</div>
<div style="position:absolute;left:716px;top:846px;font:26.67px/30px 'Liberation Mono',monospace;color:#000000;white-space:pre">=00000000</div>
<div style="position:absolute;left:0;top:880px;width:752px;height:38px;background:#f4f4f4"></div>
<div style="position:absolute;right:42px;top:886px;font:26.67px/30px 'Liberation Mono',monospace;color:#000000;white-space:pre">io_memory_bundle_write_enable</div>
<div style="position:absolute;left:716px;top:886px;font:26.67px/30px 'Liberation Mono',monospace;color:#000000;white-space:pre">=1</div>
<div style="position:absolute;left:0;top:920px;width:752px;height:38px;background:#f4f4f4"></div>
<div style="position:absolute;right:42px;top:926px;font:26.67px/30px 'Liberation Mono',monospace;color:#000000;white-space:pre">io_memory_bundle_address[31:0]</div>
<div style="position:absolute;left:716px;top:926px;font:26.67px/30px 'Liberation Mono',monospace;color:#000000;white-space:pre">=01000000</div>
<div style="position:absolute;left:0;top:960px;width:752px;height:38px;background:#4465ae"></div>
<div style="position:absolute;right:42px;top:966px;font:26.67px/30px 'Liberation Mono',monospace;color:#ffffff;white-space:pre">io_memory_bundle_write_data[31:0]</div>
<div style="position:absolute;left:716px;top:966px;font:26.67px/30px 'Liberation Mono',monospace;color:#ffffff;white-space:pre">=00000000</div>
</div>
<div style="position:absolute;left:538px;top:2244px;width:752px;height:28px;background:#cecece"></div>
<div style="position:absolute;left:544px;top:2250px;width:740px;height:16px;border-radius:8px;background:#7e8182"></div>
<div style="position:absolute;left:1296px;top:180px;width:2px;height:2098px;background:#cdc7c2"></div>
<div style="position:absolute;left:1302px;top:186px;font:24.5px/30px 'Liberation Sans',sans-serif;color:#2e3436">Waves</div>
<div style="position:absolute;left:1378px;top:202px;width:2456px;height:2px;background:#cdc7c2"></div>
<div style="position:absolute;left:1302px;top:210px;width:2px;height:2064px;background:#cdc7c2"></div>
<div style="position:absolute;left:3832px;top:202px;width:2px;height:2072px;background:#cdc7c2"></div>
<div style="position:absolute;left:1302px;top:2272px;width:2532px;height:2px;background:#cdc7c2"></div>
<div style="position:absolute;left:3804px;top:220px;width:28px;height:2024px;background:#cecece"></div>
<div style="position:absolute;left:3810px;top:226px;width:16px;height:2012px;border-radius:8px;background:#7e8182"></div>
<div style="position:absolute;left:1304px;top:2244px;width:2500px;height:28px;background:#cecece"></div>
<div style="position:absolute;left:1444px;top:2250px;width:120px;height:16px;border-radius:8px;background:#7e8182"></div>
<div style="position:absolute;left:3804px;top:2244px;width:28px;height:28px;background:#f6f5f4"></div>
<svg style="position:absolute;left:1304px;top:220px" width="2500" height="2024" viewBox="1304 220 2500 2024">
<rect x="1304" y="220" width="2500" height="2024" fill="#000"/>
<rect x="1304" y="244" width="2500" height="2" fill="#23237b"/>
<rect x="1362.2" y="246" width="2" height="12" fill="#23237b"/>
<rect x="1479.8" y="246" width="2" height="12" fill="#23237b"/>
<rect x="1597.4" y="246" width="2" height="12" fill="#23237b"/>
<rect x="1715.0" y="246" width="2" height="12" fill="#23237b"/>
<rect x="1832.6" y="246" width="2" height="12" fill="#23237b"/>
<rect x="1950.2" y="246" width="2" height="12" fill="#23237b"/>
<rect x="2067.8" y="246" width="2" height="12" fill="#23237b"/>
<rect x="2185.4" y="246" width="2" height="12" fill="#23237b"/>
<rect x="2420.6" y="246" width="2" height="12" fill="#23237b"/>
<rect x="2538.2" y="246" width="2" height="12" fill="#23237b"/>
<rect x="2655.8" y="246" width="2" height="12" fill="#23237b"/>
<rect x="2773.4" y="246" width="2" height="12" fill="#23237b"/>
<rect x="2891.0" y="246" width="2" height="12" fill="#23237b"/>
<rect x="3008.6" y="246" width="2" height="12" fill="#23237b"/>
<rect x="3126.2" y="246" width="2" height="12" fill="#23237b"/>
<rect x="3243.8" y="246" width="2" height="12" fill="#23237b"/>
<rect x="3361.4" y="246" width="2" height="12" fill="#23237b"/>
<rect x="3596.6" y="246" width="2" height="12" fill="#23237b"/>
<rect x="3714.2" y="246" width="2" height="12" fill="#23237b"/>
<rect x="2304" y="220" width="2" height="2024" fill="#23237b"/>
<rect x="3480" y="220" width="2" height="2024" fill="#23237b"/>
<g font-family="Liberation Mono" font-size="20" fill="#e0e0e0"><text x="2271" y="236">300 ps</text><text x="3447" y="236">400 ps</text></g>
<rect x="1304" y="296" width="2500" height="2" fill="#23237b"/>
<rect x="1304" y="336" width="2500" height="2" fill="#23237b"/>
<rect x="1304" y="376" width="2500" height="2" fill="#23237b"/>
<rect x="1304" y="416" width="2500" height="2" fill="#23237b"/>
<rect x="1304" y="456" width="2500" height="2" fill="#23237b"/>
<rect x="1304" y="496" width="2500" height="2" fill="#23237b"/>
<rect x="1304" y="536" width="2500" height="2" fill="#23237b"/>
<rect x="1304" y="576" width="2500" height="2" fill="#23237b"/>
<rect x="1304" y="616" width="2500" height="2" fill="#23237b"/>
<rect x="1304" y="656" width="2500" height="2" fill="#23237b"/>
<rect x="1304" y="696" width="2500" height="2" fill="#23237b"/>
<rect x="1304" y="736" width="2500" height="2" fill="#23237b"/>
<rect x="1304" y="776" width="2500" height="2" fill="#23237b"/>
<rect x="1304" y="816" width="2500" height="2" fill="#23237b"/>
<rect x="1304" y="856" width="2500" height="2" fill="#23237b"/>
<rect x="1304" y="896" width="2500" height="2" fill="#23237b"/>
<rect x="1304" y="936" width="2500" height="2" fill="#23237b"/>
<rect x="1304" y="976" width="2500" height="2" fill="#23237b"/>
<rect x="1304" y="1016" width="2500" height="2" fill="#23237b"/>
<rect x="1304" y="1056" width="2500" height="2" fill="#23237b"/>
<rect x="1304" y="1096" width="2500" height="2" fill="#23237b"/>
<rect x="1304" y="1136" width="2500" height="2" fill="#23237b"/>
<rect x="1304" y="1176" width="2500" height="2" fill="#23237b"/>
<rect x="1304" y="1216" width="2500" height="2" fill="#23237b"/>
<g font-family="Liberation Mono" font-size="20" fill="#dcdcdc">
<path d="M1304.0 293H3802.0" stroke="#00ff00" stroke-width="2" fill="none"/>
<text x="1309.0" y="286">00000000</text>
<path d="M1304.0 333H3802.0" stroke="#00ff00" stroke-width="2" fill="none"/>
<text x="1309.0" y="326">00000000</text>
<path d="M1304.0 373H3802.0" stroke="#00ff00" stroke-width="2" fill="none"/>
<text x="1309.0" y="366">00000000</text>
<path d="M1304.0 413H3802.0" stroke="#00ff00" stroke-width="2" fill="none"/>
<text x="1309.0" y="406">00000000</text>
<path d="M1304.0 453H3802.0" stroke="#00ff00" stroke-width="2" fill="none"/>
<text x="1309.0" y="446">00000000</text>
<path d="M1304.0 493H3802.0" stroke="#00ff00" stroke-width="2" fill="none"/>
<text x="1309.0" y="486">00000000</text>
<path d="M1304.0 533H3042.2M3049.2 533H3802.0M3049.2 505H3802.0" stroke="#00ff00" stroke-width="2" fill="none"/>
<path d="M3042.2 533L3048.2 505M3045.2 519.0L3048.2 533" stroke="#00c800" stroke-width="2" fill="none"/>
<text x="1309.0" y="526">00000000</text>
<text x="3050.2" y="526">00001050</text>
<path d="M1304.0 573H3113.0M3120.0 573H3802.0M3120.0 545H3802.0" stroke="#00ff00" stroke-width="2" fill="none"/>
<path d="M3113.0 573L3119.0 545M3116.0 559.0L3119.0 573" stroke="#00c800" stroke-width="2" fill="none"/>
<text x="1309.0" y="566">00000000</text>
<text x="3121.0" y="566">00001050</text>
<path d="M1304.0 613H3324.7M3331.7 613H3802.0M3331.7 585H3802.0" stroke="#00ff00" stroke-width="2" fill="none"/>
<path d="M3324.7 613L3330.7 585M3327.7 599.0L3330.7 613" stroke="#00c800" stroke-width="2" fill="none"/>
<text x="1309.0" y="606">00000000</text>
<text x="3332.7" y="606">00001888</text>
<path d="M1304.0 653H3324.7M3331.7 653H3802.0M3331.7 625H3802.0" stroke="#00ff00" stroke-width="2" fill="none"/>
<path d="M3324.7 653L3330.7 625M3327.7 639.0L3330.7 653" stroke="#00c800" stroke-width="2" fill="none"/>
<text x="1309.0" y="646">00000000</text>
<text x="3332.7" y="646">00001888</text>
<path d="M1304.0 693H3395.6M3402.6 693H3802.0M3402.6 665H3802.0" stroke="#00ff00" stroke-width="2" fill="none"/>
<path d="M3395.6 693L3401.6 665M3398.6 679.0L3401.6 693" stroke="#00c800" stroke-width="2" fill="none"/>
<text x="1309.0" y="686">00000000</text>
<text x="3403.6" y="686">00001888</text>
<path d="M1304.0 733H1605.0M1304.0 705H1605.0M1613.0 733H1699.2M1613.0 705H1699.2M1707.2 733H1793.4M1707.2 705H1793.4M1801.4 733H1887.6M1801.4 705H1887.6M1895.6 733H1981.8M1895.6 705H1981.8M1989.8 733H2075.9M1989.8 705H2075.9M2083.9 733H2170.1M2083.9 705H2170.1M2178.1 733H2264.3M2178.1 705H2264.3M2272.3 733H2358.5M2272.3 705H2358.5M2366.5 733H2452.7M2366.5 705H2452.7M2460.7 733H2546.9M2460.7 705H2546.9M2554.9 733H2641.1M2554.9 705H2641.1M2649.1 733H2735.3M2649.1 705H2735.3M2743.3 733H2829.5M2743.3 705H2829.5M2837.5 733H2923.7M2837.5 705H2923.7M2931.7 733H3017.8M2931.7 705H3017.8M3025.8 733H3112.0M3025.8 705H3112.0M3120.0 733H3206.2M3120.0 705H3206.2M3214.2 733H3300.4M3214.2 705H3300.4M3308.4 733H3394.6M3308.4 705H3394.6M3402.6 733H3488.8M3402.6 705H3488.8M3496.8 733H3583.0M3496.8 705H3583.0M3591.0 733H3802.0M3591.0 705H3802.0" stroke="#00ff00" stroke-width="2" fill="none"/>
<path d="M1605.0 705L1613.0 733M1605.0 733L1613.0 705M1699.2 705L1707.2 733M1699.2 733L1707.2 705M1793.4 705L1801.4 733M1793.4 733L1801.4 705M1887.6 705L1895.6 733M1887.6 733L1895.6 705M1981.8 705L1989.8 733M1981.8 733L1989.8 705M2075.9 705L2083.9 733M2075.9 733L2083.9 705M2170.1 705L2178.1 733M2170.1 733L2178.1 705M2264.3 705L2272.3 733M2264.3 733L2272.3 705M2358.5 705L2366.5 733M2358.5 733L2366.5 705M2452.7 705L2460.7 733M2452.7 733L2460.7 705M2546.9 705L2554.9 733M2546.9 733L2554.9 705M2641.1 705L2649.1 733M2641.1 733L2649.1 705M2735.3 705L2743.3 733M2735.3 733L2743.3 705M2829.5 705L2837.5 733M2829.5 733L2837.5 705M2923.7 705L2931.7 733M2923.7 733L2931.7 705M3017.8 705L3025.8 733M3017.8 733L3025.8 705M3112.0 705L3120.0 733M3112.0 733L3120.0 705M3206.2 705L3214.2 733M3206.2 733L3214.2 705M3300.4 705L3308.4 733M3300.4 733L3308.4 705M3394.6 705L3402.6 733M3394.6 733L3402.6 705M3488.8 705L3496.8 733M3488.8 733L3496.8 705M3583.0 705L3591.0 733M3583.0 733L3591.0 705" stroke="#00c800" stroke-width="2" fill="none"/>
<text x="1309.0" y="726">00001000</text>
<text x="1614.0" y="726">000010+</text>
<text x="1708.2" y="726">000010+</text>
<text x="1802.4" y="726">000011+</text>
<text x="1896.6" y="726">000011+</text>
<text x="1990.8" y="726">000011+</text>
<text x="2084.9" y="726">000011+</text>
<text x="2179.1" y="726">000011+</text>
<text x="2273.3" y="726">000011+</text>
<text x="2367.5" y="726">000011+</text>
<text x="2461.7" y="726">000011+</text>
<text x="2555.9" y="726">000011+</text>
<text x="2650.1" y="726">000011+</text>
<text x="2744.3" y="726">000011+</text>
<text x="2838.5" y="726">000010+</text>
<text x="2932.7" y="726">000010+</text>
<text x="3026.8" y="726">000010+</text>
<text x="3121.0" y="726">000010+</text>
<text x="3215.2" y="726">000010+</text>
<text x="3309.4" y="726">000010+</text>
<text x="3403.6" y="726">000010+</text>
<text x="3497.8" y="726">000011+</text>
<text x="3592.0" y="726">000011C4</text>
<path d="M1304.0 773H1605.0M1304.0 745H1605.0M1613.0 773H1699.2M1613.0 745H1699.2M1707.2 773H1793.4M1707.2 745H1793.4M1801.4 773H1887.6M1801.4 745H1887.6M1895.6 773H1981.8M1895.6 745H1981.8M1989.8 773H2075.9M1989.8 745H2075.9M2083.9 773H2170.1M2083.9 745H2170.1M2178.1 773H2264.3M2178.1 745H2264.3M2272.3 773H2358.5M2272.3 745H2358.5M2366.5 773H2452.7M2366.5 745H2452.7M2460.7 773H2546.9M2460.7 745H2546.9M2554.9 773H2641.1M2554.9 745H2641.1M2649.1 773H2735.3M2649.1 745H2735.3M2743.3 773H2829.5M2743.3 745H2829.5M2837.5 773H2923.7M2837.5 745H2923.7M2931.7 773H3017.8M2931.7 745H3017.8M3025.8 773H3112.0M3025.8 745H3112.0M3120.0 773H3206.2M3120.0 745H3206.2M3214.2 773H3300.4M3214.2 745H3300.4M3308.4 773H3394.6M3308.4 745H3394.6M3402.6 773H3488.8M3402.6 745H3488.8M3496.8 773H3583.0M3496.8 745H3583.0M3591.0 773H3802.0M3591.0 745H3802.0" stroke="#00ff00" stroke-width="2" fill="none"/>
<path d="M1605.0 745L1613.0 773M1605.0 773L1613.0 745M1699.2 745L1707.2 773M1699.2 773L1707.2 745M1793.4 745L1801.4 773M1793.4 773L1801.4 745M1887.6 745L1895.6 773M1887.6 773L1895.6 745M1981.8 745L1989.8 773M1981.8 773L1989.8 745M2075.9 745L2083.9 773M2075.9 773L2083.9 745M2170.1 745L2178.1 773M2170.1 773L2178.1 745M2264.3 745L2272.3 773M2264.3 773L2272.3 745M2358.5 745L2366.5 773M2358.5 773L2366.5 745M2452.7 745L2460.7 773M2452.7 773L2460.7 745M2546.9 745L2554.9 773M2546.9 773L2554.9 745M2641.1 745L2649.1 773M2641.1 773L2649.1 745M2735.3 745L2743.3 773M2735.3 773L2743.3 745M2829.5 745L2837.5 773M2829.5 773L2837.5 745M2923.7 745L2931.7 773M2923.7 773L2931.7 745M3017.8 745L3025.8 773M3017.8 773L3025.8 745M3112.0 745L3120.0 773M3112.0 773L3120.0 745M3206.2 745L3214.2 773M3206.2 773L3214.2 745M3300.4 745L3308.4 773M3300.4 773L3308.4 745M3394.6 745L3402.6 773M3394.6 773L3402.6 745M3488.8 745L3496.8 773M3488.8 773L3496.8 745M3583.0 745L3591.0 773M3583.0 773L3591.0 745" stroke="#00c800" stroke-width="2" fill="none"/>
<text x="1309.0" y="766">00001000</text>
<text x="1614.0" y="766">000010+</text>
<text x="1708.2" y="766">000010+</text>
<text x="1802.4" y="766">000011+</text>
<text x="1896.6" y="766">000011+</text>
<text x="1990.8" y="766">000011+</text>
<text x="2084.9" y="766">000011+</text>
<text x="2179.1" y="766">000011+</text>
<text x="2273.3" y="766">000011+</text>
<text x="2367.5" y="766">000011+</text>
<text x="2461.7" y="766">000011+</text>
<text x="2555.9" y="766">000011+</text>
<text x="2650.1" y="766">000011+</text>
<text x="2744.3" y="766">000011+</text>
<text x="2838.5" y="766">000010+</text>
<text x="2932.7" y="766">000010+</text>
<text x="3026.8" y="766">000010+</text>
<text x="3121.0" y="766">000010+</text>
<text x="3215.2" y="766">000010+</text>
<text x="3309.4" y="766">000010+</text>
<text x="3403.6" y="766">000010+</text>
<text x="3497.8" y="766">000011+</text>
<text x="3592.0" y="766">000011C4</text>
<path d="M1304.0 813H1628.3M1304.0 785H1628.3M1636.3 813H1722.5M1636.3 785H1722.5M1730.5 813H1816.7M1730.5 785H1816.7M1824.7 813H1910.9M1824.7 785H1910.9M1918.9 813H2005.1M1918.9 785H2005.1M2013.1 813H2099.2M2013.1 785H2099.2M2107.2 813H2193.4M2107.2 785H2193.4M2201.4 813H2287.6M2201.4 785H2287.6M2295.6 813H2381.8M2295.6 785H2381.8M2389.8 813H2476.0M2389.8 785H2476.0M2484.0 813H2570.2M2484.0 785H2570.2M2578.2 813H2664.4M2578.2 785H2664.4M2672.4 813H2758.6M2672.4 785H2758.6M2766.6 813H2852.8M2766.6 785H2852.8M2860.8 813H2947.0M2860.8 785H2947.0M2955.0 813H3041.2M2955.0 785H3041.2M3049.2 813H3135.3M3049.2 785H3135.3M3143.3 813H3229.5M3143.3 785H3229.5M3237.5 813H3323.7M3237.5 785H3323.7M3331.7 813H3417.9M3331.7 785H3417.9M3425.9 813H3512.1M3425.9 785H3512.1M3520.1 813H3606.3M3520.1 785H3606.3M3614.3 813H3802.0M3614.3 785H3802.0" stroke="#00ff00" stroke-width="2" fill="none"/>
<path d="M1628.3 785L1636.3 813M1628.3 813L1636.3 785M1722.5 785L1730.5 813M1722.5 813L1730.5 785M1816.7 785L1824.7 813M1816.7 813L1824.7 785M1910.9 785L1918.9 813M1910.9 813L1918.9 785M2005.1 785L2013.1 813M2005.1 813L2013.1 785M2099.2 785L2107.2 813M2099.2 813L2107.2 785M2193.4 785L2201.4 813M2193.4 813L2201.4 785M2287.6 785L2295.6 813M2287.6 813L2295.6 785M2381.8 785L2389.8 813M2381.8 813L2389.8 785M2476.0 785L2484.0 813M2476.0 813L2484.0 785M2570.2 785L2578.2 813M2570.2 813L2578.2 785M2664.4 785L2672.4 813M2664.4 813L2672.4 785M2758.6 785L2766.6 813M2758.6 813L2766.6 785M2852.8 785L2860.8 813M2852.8 813L2860.8 785M2947.0 785L2955.0 813M2947.0 813L2955.0 785M3041.2 785L3049.2 813M3041.2 813L3049.2 785M3135.3 785L3143.3 813M3135.3 813L3143.3 785M3229.5 785L3237.5 813M3229.5 813L3237.5 785M3323.7 785L3331.7 813M3323.7 813L3331.7 785M3417.9 785L3425.9 813M3417.9 813L3425.9 785M3512.1 785L3520.1 813M3512.1 813L3520.1 785M3606.3 785L3614.3 813M3606.3 813L3614.3 785" stroke="#00c800" stroke-width="2" fill="none"/>
<text x="1309.0" y="806">10000137</text>
<text x="1637.3" y="806">000000+</text>
<text x="1731.5" y="806">190080+</text>
<text x="1825.7" y="806">FF0101+</text>
<text x="1919.9" y="806">001126+</text>
<text x="2014.1" y="806">008124+</text>
<text x="2108.2" y="806">010104+</text>
<text x="2202.4" y="806">000005+</text>
<text x="2296.6" y="806">FEA42A+</text>
<text x="2390.8" y="806">DEADC5+</text>
<text x="2485.0" y="806">EEF505+</text>
<text x="2579.2" y="806">00A022+</text>
<text x="2673.4" y="806">000000+</text>
<text x="2767.6" y="806">E58080+</text>
<text x="2861.8" y="806">000002+</text>
<text x="2956.0" y="806">040282+</text>
<text x="3050.2" y="806">305293+</text>
<text x="3144.3" y="806">000022+</text>
<text x="3238.5" y="806">888282+</text>
<text x="3332.7" y="806">300293+</text>
<text x="3426.9" y="806">000080+</text>
<text x="3521.1" y="806">004000+</text>
<text x="3615.3" y="806">0000006F</text>
<path d="M1304.0 853H1534.1M1304.0 825H1534.1M1542.1 853H1628.3M1542.1 825H1628.3M1636.3 853H1722.5M1636.3 825H1722.5M1730.5 853H1816.7M1730.5 825H1816.7M1824.7 853H1910.9M1824.7 825H1910.9M1918.9 853H2005.1M1918.9 825H2005.1M2013.1 853H2099.2M2013.1 825H2099.2M2107.2 853H2193.4M2107.2 825H2193.4M2201.4 853H2287.6M2201.4 825H2287.6M2295.6 853H2381.8M2295.6 825H2381.8M2389.8 853H2476.0M2389.8 825H2476.0M2484.0 853H2570.2M2484.0 825H2570.2M2578.2 853H2664.4M2578.2 825H2664.4M2672.4 853H2758.6M2672.4 825H2758.6M2766.6 853H2852.8M2766.6 825H2852.8M2860.8 853H2947.0M2860.8 825H2947.0M2955.0 853H3041.2M2955.0 825H3041.2M3049.2 853H3135.3M3049.2 825H3135.3M3143.3 853H3229.5M3143.3 825H3229.5M3237.5 853H3323.7M3237.5 825H3323.7M3331.7 853H3417.9M3331.7 825H3417.9M3425.9 853H3512.1M3425.9 825H3512.1M3520.1 853H3606.3M3520.1 825H3606.3M3614.3 853H3802.0M3614.3 825H3802.0" stroke="#00ff00" stroke-width="2" fill="none"/>
<path d="M1534.1 825L1542.1 853M1534.1 853L1542.1 825M1628.3 825L1636.3 853M1628.3 853L1636.3 825M1722.5 825L1730.5 853M1722.5 853L1730.5 825M1816.7 825L1824.7 853M1816.7 853L1824.7 825M1910.9 825L1918.9 853M1910.9 853L1918.9 825M2005.1 825L2013.1 853M2005.1 853L2013.1 825M2099.2 825L2107.2 853M2099.2 853L2107.2 825M2193.4 825L2201.4 853M2193.4 853L2201.4 825M2287.6 825L2295.6 853M2287.6 853L2295.6 825M2381.8 825L2389.8 853M2381.8 853L2389.8 825M2476.0 825L2484.0 853M2476.0 853L2484.0 825M2570.2 825L2578.2 853M2570.2 853L2578.2 825M2664.4 825L2672.4 853M2664.4 853L2672.4 825M2758.6 825L2766.6 853M2758.6 853L2766.6 825M2852.8 825L2860.8 853M2852.8 853L2860.8 825M2947.0 825L2955.0 853M2947.0 853L2955.0 825M3041.2 825L3049.2 853M3041.2 853L3049.2 825M3135.3 825L3143.3 853M3135.3 853L3143.3 825M3229.5 825L3237.5 853M3229.5 853L3237.5 825M3323.7 825L3331.7 853M3323.7 853L3331.7 825M3417.9 825L3425.9 853M3417.9 853L3425.9 825M3512.1 825L3520.1 853M3512.1 853L3520.1 825M3606.3 825L3614.3 853M3606.3 853L3614.3 825" stroke="#00c800" stroke-width="2" fill="none"/>
<text x="1309.0" y="846">00000013</text>
<text x="1543.1" y="846">100001+</text>
<text x="1637.3" y="846">000000+</text>
<text x="1731.5" y="846">190080+</text>
<text x="1825.7" y="846">FF0101+</text>
<text x="1919.9" y="846">001126+</text>
<text x="2014.1" y="846">008124+</text>
<text x="2108.2" y="846">010104+</text>
<text x="2202.4" y="846">000005+</text>
<text x="2296.6" y="846">FEA42A+</text>
<text x="2390.8" y="846">DEADC5+</text>
<text x="2485.0" y="846">EEF505+</text>
<text x="2579.2" y="846">00A022+</text>
<text x="2673.4" y="846">000000+</text>
<text x="2767.6" y="846">E58080+</text>
<text x="2861.8" y="846">000002+</text>
<text x="2956.0" y="846">040282+</text>
<text x="3050.2" y="846">305293+</text>
<text x="3144.3" y="846">000022+</text>
<text x="3238.5" y="846">888282+</text>
<text x="3332.7" y="846">300293+</text>
<text x="3426.9" y="846">000080+</text>
<text x="3521.1" y="846">004000+</text>
<text x="3615.3" y="846">0000006F</text>
<path d="M1304.0 893H1534.1M1304.0 865H1534.1M1542.1 893H1628.3M1542.1 865H1628.3M1636.3 893H1722.5M1636.3 865H1722.5M1730.5 893H1816.7M1730.5 865H1816.7M1824.7 893H1910.9M1824.7 865H1910.9M1918.9 893H2005.1M1918.9 865H2005.1M2013.1 893H2099.2M2013.1 865H2099.2M2107.2 893H2193.4M2107.2 865H2193.4M2201.4 893H2287.6M2201.4 865H2287.6M2295.6 893H2381.8M2295.6 865H2381.8M2389.8 893H2476.0M2389.8 865H2476.0M2484.0 893H2570.2M2484.0 865H2570.2M2578.2 893H2664.4M2578.2 865H2664.4M2672.4 893H2758.6M2672.4 865H2758.6M2766.6 893H2852.8M2766.6 865H2852.8M2860.8 893H2947.0M2860.8 865H2947.0M2955.0 893H3041.2M2955.0 865H3041.2M3049.2 893H3135.3M3049.2 865H3135.3M3143.3 893H3229.5M3143.3 865H3229.5M3237.5 893H3323.7M3237.5 865H3323.7M3331.7 893H3417.9M3331.7 865H3417.9M3425.9 893H3512.1M3425.9 865H3512.1M3520.1 893H3606.3M3520.1 865H3606.3M3614.3 893H3802.0M3614.3 865H3802.0" stroke="#00ff00" stroke-width="2" fill="none"/>
<path d="M1534.1 865L1542.1 893M1534.1 893L1542.1 865M1628.3 865L1636.3 893M1628.3 893L1636.3 865M1722.5 865L1730.5 893M1722.5 893L1730.5 865M1816.7 865L1824.7 893M1816.7 893L1824.7 865M1910.9 865L1918.9 893M1910.9 893L1918.9 865M2005.1 865L2013.1 893M2005.1 893L2013.1 865M2099.2 865L2107.2 893M2099.2 893L2107.2 865M2193.4 865L2201.4 893M2193.4 893L2201.4 865M2287.6 865L2295.6 893M2287.6 893L2295.6 865M2381.8 865L2389.8 893M2381.8 893L2389.8 865M2476.0 865L2484.0 893M2476.0 893L2484.0 865M2570.2 865L2578.2 893M2570.2 893L2578.2 865M2664.4 865L2672.4 893M2664.4 893L2672.4 865M2758.6 865L2766.6 893M2758.6 893L2766.6 865M2852.8 865L2860.8 893M2852.8 893L2860.8 865M2947.0 865L2955.0 893M2947.0 893L2955.0 865M3041.2 865L3049.2 893M3041.2 893L3049.2 865M3135.3 865L3143.3 893M3135.3 893L3143.3 865M3229.5 865L3237.5 893M3229.5 893L3237.5 865M3323.7 865L3331.7 893M3323.7 893L3331.7 865M3417.9 865L3425.9 893M3417.9 893L3425.9 865M3512.1 865L3520.1 893M3512.1 893L3520.1 865M3606.3 865L3614.3 893M3606.3 893L3614.3 865" stroke="#00c800" stroke-width="2" fill="none"/>
<text x="1309.0" y="886">00000013</text>
<text x="1543.1" y="886">100001+</text>
<text x="1637.3" y="886">000000+</text>
<text x="1731.5" y="886">190080+</text>
<text x="1825.7" y="886">FF0101+</text>
<text x="1919.9" y="886">001126+</text>
<text x="2014.1" y="886">008124+</text>
<text x="2108.2" y="886">010104+</text>
<text x="2202.4" y="886">000005+</text>
<text x="2296.6" y="886">FEA42A+</text>
<text x="2390.8" y="886">DEADC5+</text>
<text x="2485.0" y="886">EEF505+</text>
<text x="2579.2" y="886">00A022+</text>
<text x="2673.4" y="886">000000+</text>
<text x="2767.6" y="886">E58080+</text>
<text x="2861.8" y="886">000002+</text>
<text x="2956.0" y="886">040282+</text>
<text x="3050.2" y="886">305293+</text>
<text x="3144.3" y="886">000022+</text>
<text x="3238.5" y="886">888282+</text>
<text x="3332.7" y="886">300293+</text>
<text x="3426.9" y="886">000080+</text>
<text x="3521.1" y="886">004000+</text>
<text x="3615.3" y="886">0000006F</text>
<path d="M1304.0 933H1534.1M1304.0 905H1534.1M1542.1 933H1628.3M1542.1 905H1628.3M1636.3 933H1722.5M1636.3 905H1722.5M1730.5 933H1816.7M1730.5 905H1816.7M1824.7 933H1910.9M1824.7 905H1910.9M1918.9 933H2005.1M1918.9 905H2005.1M2013.1 933H2099.2M2013.1 905H2099.2M2107.2 933H2193.4M2107.2 905H2193.4M2201.4 933H2287.6M2201.4 905H2287.6M2295.6 933H2381.8M2295.6 905H2381.8M2389.8 933H2476.0M2389.8 905H2476.0M2484.0 933H2570.2M2484.0 905H2570.2M2578.2 933H2664.4M2578.2 905H2664.4M2672.4 933H2758.6M2672.4 905H2758.6M2766.6 933H2852.8M2766.6 905H2852.8M2860.8 933H2947.0M2860.8 905H2947.0M2955.0 933H3041.2M2955.0 905H3041.2M3049.2 933H3135.3M3049.2 905H3135.3M3143.3 933H3229.5M3143.3 905H3229.5M3237.5 933H3323.7M3237.5 905H3323.7M3331.7 933H3417.9M3331.7 905H3417.9M3425.9 933H3512.1M3425.9 905H3512.1M3520.1 933H3606.3M3520.1 905H3606.3M3614.3 933H3802.0M3614.3 905H3802.0" stroke="#00ff00" stroke-width="2" fill="none"/>
<path d="M1534.1 905L1542.1 933M1534.1 933L1542.1 905M1628.3 905L1636.3 933M1628.3 933L1636.3 905M1722.5 905L1730.5 933M1722.5 933L1730.5 905M1816.7 905L1824.7 933M1816.7 933L1824.7 905M1910.9 905L1918.9 933M1910.9 933L1918.9 905M2005.1 905L2013.1 933M2005.1 933L2013.1 905M2099.2 905L2107.2 933M2099.2 933L2107.2 905M2193.4 905L2201.4 933M2193.4 933L2201.4 905M2287.6 905L2295.6 933M2287.6 933L2295.6 905M2381.8 905L2389.8 933M2381.8 933L2389.8 905M2476.0 905L2484.0 933M2476.0 933L2484.0 905M2570.2 905L2578.2 933M2570.2 933L2578.2 905M2664.4 905L2672.4 933M2664.4 933L2672.4 905M2758.6 905L2766.6 933M2758.6 933L2766.6 905M2852.8 905L2860.8 933M2852.8 933L2860.8 905M2947.0 905L2955.0 933M2947.0 933L2955.0 905M3041.2 905L3049.2 933M3041.2 933L3049.2 905M3135.3 905L3143.3 933M3135.3 933L3143.3 905M3229.5 905L3237.5 933M3229.5 933L3237.5 905M3323.7 905L3331.7 933M3323.7 933L3331.7 905M3417.9 905L3425.9 933M3417.9 933L3425.9 905M3512.1 905L3520.1 933M3512.1 933L3520.1 905M3606.3 905L3614.3 933M3606.3 933L3614.3 905" stroke="#00c800" stroke-width="2" fill="none"/>
<text x="1309.0" y="926">00000013</text>
<text x="1543.1" y="926">100001+</text>
<text x="1637.3" y="926">000000+</text>
<text x="1731.5" y="926">190080+</text>
<text x="1825.7" y="926">FF0101+</text>
<text x="1919.9" y="926">001126+</text>
<text x="2014.1" y="926">008124+</text>
<text x="2108.2" y="926">010104+</text>
<text x="2202.4" y="926">000005+</text>
<text x="2296.6" y="926">FEA42A+</text>
<text x="2390.8" y="926">DEADC5+</text>
<text x="2485.0" y="926">EEF505+</text>
<text x="2579.2" y="926">00A022+</text>
<text x="2673.4" y="926">000000+</text>
<text x="2767.6" y="926">E58080+</text>
<text x="2861.8" y="926">000002+</text>
<text x="2956.0" y="926">040282+</text>
<text x="3050.2" y="926">305293+</text>
<text x="3144.3" y="926">000022+</text>
<text x="3238.5" y="926">888282+</text>
<text x="3332.7" y="926">300293+</text>
<text x="3426.9" y="926">000080+</text>
<text x="3521.1" y="926">004000+</text>
<text x="3615.3" y="926">0000006F</text>
<path d="M1304.0 973H1726.5M1820.7 973H2762.6M2856.8 973H3421.9" stroke="#008a00" stroke-width="2" fill="none"/>
<path d="M1726.5 945H1820.7M2762.6 945H2856.8M3421.9 945H3804.0" stroke="#00ff00" stroke-width="2" fill="none"/>
<path d="M1726.5 945V973M1820.7 945V973M2762.6 945V973M2856.8 945V973M3421.9 945V973" stroke="#00c800" stroke-width="2" fill="none"/>
<path d="M1304.0 1013H1534.1M1304.0 985H1534.1M1542.1 1013H1605.0M1542.1 985H1605.0M1613.0 1013H1628.3M1613.0 985H1628.3M1636.3 1013H1699.2M1636.3 985H1699.2M1707.2 1013H1722.5M1707.2 985H1722.5M1730.5 1013H1793.4M1730.5 985H1793.4M1801.4 1013H1816.7M1801.4 985H1816.7M1824.7 1013H1887.6M1824.7 985H1887.6M1895.6 1013H1910.9M1895.6 985H1910.9M1918.9 1013H1981.8M1918.9 985H1981.8M1989.8 1013H2005.1M1989.8 985H2005.1M2013.1 1013H2075.9M2013.1 985H2075.9M2083.9 1013H2099.2M2083.9 985H2099.2M2107.2 1013H2170.1M2107.2 985H2170.1M2178.1 1013H2193.4M2178.1 985H2193.4M2201.4 1013H2264.3M2201.4 985H2264.3M2272.3 1013H2287.6M2272.3 985H2287.6M2295.6 1013H2358.5M2295.6 985H2358.5M2366.5 1013H2381.8M2366.5 985H2381.8M2389.8 1013H2452.7M2389.8 985H2452.7M2460.7 1013H2476.0M2460.7 985H2476.0M2484.0 1013H2546.9M2484.0 985H2546.9M2554.9 1013H2570.2M2554.9 985H2570.2M2578.2 1013H2641.1M2578.2 985H2641.1M2649.1 1013H2664.4M2649.1 985H2664.4M2672.4 1013H2735.3M2672.4 985H2735.3M2743.3 1013H2758.6M2743.3 985H2758.6M2766.6 1013H2829.5M2766.6 985H2829.5M2837.5 1013H2852.8M2837.5 985H2852.8M2860.8 1013H2923.7M2860.8 985H2923.7M2931.7 1013H2947.0M2931.7 985H2947.0M2955.0 1013H3017.8M2955.0 985H3017.8M3025.8 1013H3041.2M3025.8 985H3041.2M3049.2 1013H3112.0M3049.2 985H3112.0M3120.0 1013H3135.3M3120.0 985H3135.3M3143.3 1013H3206.2M3143.3 985H3206.2M3214.2 1013H3229.5M3214.2 985H3229.5M3237.5 1013H3300.4M3237.5 985H3300.4M3308.4 1013H3323.7M3308.4 985H3323.7M3331.7 1013H3394.6M3331.7 985H3394.6M3402.6 1013H3417.9M3402.6 985H3417.9M3425.9 1013H3512.1M3425.9 985H3512.1M3520.1 1013H3583.0M3520.1 985H3583.0M3591.0 1013H3606.3M3591.0 985H3606.3M3614.3 1013H3802.0M3614.3 985H3802.0" stroke="#00ff00" stroke-width="2" fill="none"/>
<path d="M1534.1 985L1542.1 1013M1534.1 1013L1542.1 985M1605.0 985L1613.0 1013M1605.0 1013L1613.0 985M1628.3 985L1636.3 1013M1628.3 1013L1636.3 985M1699.2 985L1707.2 1013M1699.2 1013L1707.2 985M1722.5 985L1730.5 1013M1722.5 1013L1730.5 985M1793.4 985L1801.4 1013M1793.4 1013L1801.4 985M1816.7 985L1824.7 1013M1816.7 1013L1824.7 985M1887.6 985L1895.6 1013M1887.6 1013L1895.6 985M1910.9 985L1918.9 1013M1910.9 1013L1918.9 985M1981.8 985L1989.8 1013M1981.8 1013L1989.8 985M2005.1 985L2013.1 1013M2005.1 1013L2013.1 985M2075.9 985L2083.9 1013M2075.9 1013L2083.9 985M2099.2 985L2107.2 1013M2099.2 1013L2107.2 985M2170.1 985L2178.1 1013M2170.1 1013L2178.1 985M2193.4 985L2201.4 1013M2193.4 1013L2201.4 985M2264.3 985L2272.3 1013M2264.3 1013L2272.3 985M2287.6 985L2295.6 1013M2287.6 1013L2295.6 985M2358.5 985L2366.5 1013M2358.5 1013L2366.5 985M2381.8 985L2389.8 1013M2381.8 1013L2389.8 985M2452.7 985L2460.7 1013M2452.7 1013L2460.7 985M2476.0 985L2484.0 1013M2476.0 1013L2484.0 985M2546.9 985L2554.9 1013M2546.9 1013L2554.9 985M2570.2 985L2578.2 1013M2570.2 1013L2578.2 985M2641.1 985L2649.1 1013M2641.1 1013L2649.1 985M2664.4 985L2672.4 1013M2664.4 1013L2672.4 985M2735.3 985L2743.3 1013M2735.3 1013L2743.3 985M2758.6 985L2766.6 1013M2758.6 1013L2766.6 985M2829.5 985L2837.5 1013M2829.5 1013L2837.5 985M2852.8 985L2860.8 1013M2852.8 1013L2860.8 985M2923.7 985L2931.7 1013M2923.7 1013L2931.7 985M2947.0 985L2955.0 1013M2947.0 1013L2955.0 985M3017.8 985L3025.8 1013M3017.8 1013L3025.8 985M3041.2 985L3049.2 1013M3041.2 1013L3049.2 985M3112.0 985L3120.0 1013M3112.0 1013L3120.0 985M3135.3 985L3143.3 1013M3135.3 1013L3143.3 985M3206.2 985L3214.2 1013M3206.2 1013L3214.2 985M3229.5 985L3237.5 1013M3229.5 1013L3237.5 985M3300.4 985L3308.4 1013M3300.4 1013L3308.4 985M3323.7 985L3331.7 1013M3323.7 1013L3331.7 985M3394.6 985L3402.6 1013M3394.6 1013L3402.6 985M3417.9 985L3425.9 1013M3417.9 1013L3425.9 985M3512.1 985L3520.1 1013M3512.1 1013L3520.1 985M3583.0 985L3591.0 1013M3583.0 1013L3591.0 985M3606.3 985L3614.3 1013M3606.3 1013L3614.3 985" stroke="#00c800" stroke-width="2" fill="none"/>
<text x="1309.0" y="1006">00001000</text>
<text x="1543.1" y="1006">1000+</text>
<text x="1614.0" y="1006">+</text>
<text x="1637.3" y="1006">0000+</text>
<text x="1708.2" y="1006">+</text>
<text x="1731.5" y="1006">0000+</text>
<text x="1802.4" y="1006">+</text>
<text x="1825.7" y="1006">0000+</text>
<text x="1896.6" y="1006">+</text>
<text x="1919.9" y="1006">0000+</text>
<text x="1990.8" y="1006">+</text>
<text x="2014.1" y="1006">0000+</text>
<text x="2084.9" y="1006">+</text>
<text x="2108.2" y="1006">0000+</text>
<text x="2179.1" y="1006">+</text>
<text x="2202.4" y="1006">0000+</text>
<text x="2273.3" y="1006">+</text>
<text x="2296.6" y="1006">0000+</text>
<text x="2367.5" y="1006">+</text>
<text x="2390.8" y="1006">DEAD+</text>
<text x="2461.7" y="1006">+</text>
<text x="2485.0" y="1006">0000+</text>
<text x="2555.9" y="1006">+</text>
<text x="2579.2" y="1006">0000+</text>
<text x="2650.1" y="1006">+</text>
<text x="2673.4" y="1006">0000+</text>
<text x="2744.3" y="1006">+</text>
<text x="2767.6" y="1006">0000+</text>
<text x="2838.5" y="1006">+</text>
<text x="2861.8" y="1006">0000+</text>
<text x="2932.7" y="1006">+</text>
<text x="2956.0" y="1006">0000+</text>
<text x="3026.8" y="1006">+</text>
<text x="3050.2" y="1006">0000+</text>
<text x="3121.0" y="1006">+</text>
<text x="3144.3" y="1006">0000+</text>
<text x="3215.2" y="1006">+</text>
<text x="3238.5" y="1006">0000+</text>
<text x="3309.4" y="1006">+</text>
<text x="3332.7" y="1006">0000+</text>
<text x="3403.6" y="1006">+</text>
<text x="3426.9" y="1006">000011+</text>
<text x="3521.1" y="1006">0000+</text>
<text x="3592.0" y="1006">+</text>
<text x="3615.3" y="1006">000011C4</text>
<path d="M1304.0 1053H3804.0" stroke="#008a00" stroke-width="2" fill="none"/>
<path d="M1304.0 1093H3802.0" stroke="#00ff00" stroke-width="2" fill="none"/>
<text x="1309.0" y="1086">00000000</text>
<path d="M1304.0 1133H1914.9M2103.2 1133H2291.6M2385.8 1133H2574.2M2668.4 1133H3804.0" stroke="#008a00" stroke-width="2" fill="none"/>
<path d="M1914.9 1105H2103.2M2291.6 1105H2385.8M2574.2 1105H2668.4" stroke="#00ff00" stroke-width="2" fill="none"/>
<path d="M1914.9 1105V1133M2103.2 1105V1133M2291.6 1105V1133M2385.8 1105V1133M2574.2 1105V1133M2668.4 1105V1133" stroke="#00c800" stroke-width="2" fill="none"/>
<path d="M1304.0 1173H1535.1M1542.1 1173H1628.3M1542.1 1145H1628.3M1636.3 1173H1699.2M1636.3 1145H1699.2M1707.2 1173H1722.5M1707.2 1145H1722.5M1730.5 1173H1793.4M1730.5 1145H1793.4M1801.4 1173H1816.7M1801.4 1145H1816.7M1824.7 1173H1887.6M1824.7 1145H1887.6M1895.6 1173H1910.9M1895.6 1145H1910.9M1918.9 1173H2005.1M1918.9 1145H2005.1M2013.1 1173H2099.2M2013.1 1145H2099.2M2107.2 1173H2193.4M2107.2 1145H2193.4M2200.4 1173H2288.6M2295.6 1173H2381.8M2295.6 1145H2381.8M2389.8 1173H2476.0M2389.8 1145H2476.0M2484.0 1173H2546.9M2484.0 1145H2546.9M2554.9 1173H2570.2M2554.9 1145H2570.2M2578.2 1173H2664.4M2578.2 1145H2664.4M2672.4 1173H2735.3M2672.4 1145H2735.3M2743.3 1173H2758.6M2743.3 1145H2758.6M2766.6 1173H2829.5M2766.6 1145H2829.5M2837.5 1173H2852.8M2837.5 1145H2852.8M2860.8 1173H2923.7M2860.8 1145H2923.7M2931.7 1173H2947.0M2931.7 1145H2947.0M2955.0 1173H3017.8M2955.0 1145H3017.8M3025.8 1173H3041.2M3025.8 1145H3041.2M3048.2 1173H3136.3M3143.3 1173H3229.5M3143.3 1145H3229.5M3237.5 1173H3300.4M3237.5 1145H3300.4M3308.4 1173H3323.7M3308.4 1145H3323.7M3330.7 1173H3418.9M3425.9 1173H3512.1M3425.9 1145H3512.1M3520.1 1173H3583.0M3520.1 1145H3583.0M3591.0 1173H3606.3M3591.0 1145H3606.3M3614.3 1173H3802.0M3614.3 1145H3802.0" stroke="#00ff00" stroke-width="2" fill="none"/>
<path d="M1535.1 1173L1541.1 1145M1538.1 1159.0L1541.1 1173M1628.3 1145L1636.3 1173M1628.3 1173L1636.3 1145M1699.2 1145L1707.2 1173M1699.2 1173L1707.2 1145M1722.5 1145L1730.5 1173M1722.5 1173L1730.5 1145M1793.4 1145L1801.4 1173M1793.4 1173L1801.4 1145M1816.7 1145L1824.7 1173M1816.7 1173L1824.7 1145M1887.6 1145L1895.6 1173M1887.6 1173L1895.6 1145M1910.9 1145L1918.9 1173M1910.9 1173L1918.9 1145M2005.1 1145L2013.1 1173M2005.1 1173L2013.1 1145M2099.2 1145L2107.2 1173M2099.2 1173L2107.2 1145M2194.4 1145L2200.4 1173M2194.4 1173L2197.4 1159.0M2288.6 1173L2294.6 1145M2291.6 1159.0L2294.6 1173M2381.8 1145L2389.8 1173M2381.8 1173L2389.8 1145M2476.0 1145L2484.0 1173M2476.0 1173L2484.0 1145M2546.9 1145L2554.9 1173M2546.9 1173L2554.9 1145M2570.2 1145L2578.2 1173M2570.2 1173L2578.2 1145M2664.4 1145L2672.4 1173M2664.4 1173L2672.4 1145M2735.3 1145L2743.3 1173M2735.3 1173L2743.3 1145M2758.6 1145L2766.6 1173M2758.6 1173L2766.6 1145M2829.5 1145L2837.5 1173M2829.5 1173L2837.5 1145M2852.8 1145L2860.8 1173M2852.8 1173L2860.8 1145M2923.7 1145L2931.7 1173M2923.7 1173L2931.7 1145M2947.0 1145L2955.0 1173M2947.0 1173L2955.0 1145M3017.8 1145L3025.8 1173M3017.8 1173L3025.8 1145M3042.2 1145L3048.2 1173M3042.2 1173L3045.2 1159.0M3136.3 1173L3142.3 1145M3139.3 1159.0L3142.3 1173M3229.5 1145L3237.5 1173M3229.5 1173L3237.5 1145M3300.4 1145L3308.4 1173M3300.4 1173L3308.4 1145M3324.7 1145L3330.7 1173M3324.7 1173L3327.7 1159.0M3418.9 1173L3424.9 1145M3421.9 1159.0L3424.9 1173M3512.1 1145L3520.1 1173M3512.1 1173L3520.1 1145M3583.0 1145L3591.0 1173M3583.0 1173L3591.0 1145M3606.3 1145L3614.3 1173M3606.3 1173L3614.3 1145" stroke="#00c800" stroke-width="2" fill="none"/>
<text x="1309.0" y="1166">00000000</text>
<text x="1543.1" y="1166">100000+</text>
<text x="1637.3" y="1166">0000+</text>
<text x="1708.2" y="1166">+</text>
<text x="1731.5" y="1166">0000+</text>
<text x="1802.4" y="1166">+</text>
<text x="1825.7" y="1166">0FFF+</text>
<text x="1896.6" y="1166">+</text>
<text x="1919.9" y="1166">0FFFFF+</text>
<text x="2014.1" y="1166">0FFFFF+</text>
<text x="2108.2" y="1166">100000+</text>
<text x="2202.4" y="1166">000000+</text>
<text x="2296.6" y="1166">0FFFFF+</text>
<text x="2390.8" y="1166">1EADC0+</text>
<text x="2485.0" y="1166">1EAD+</text>
<text x="2555.9" y="1166">+</text>
<text x="2579.2" y="1166">000000+</text>
<text x="2673.4" y="1166">0000+</text>
<text x="2744.3" y="1166">+</text>
<text x="2767.6" y="1166">0000+</text>
<text x="2838.5" y="1166">+</text>
<text x="2861.8" y="1166">0000+</text>
<text x="2932.7" y="1166">+</text>
<text x="2956.0" y="1166">0000+</text>
<text x="3026.8" y="1166">+</text>
<text x="3050.2" y="1166">000000+</text>
<text x="3144.3" y="1166">000020+</text>
<text x="3238.5" y="1166">0000+</text>
<text x="3309.4" y="1166">+</text>
<text x="3332.7" y="1166">000000+</text>
<text x="3426.9" y="1166">000011+</text>
<text x="3521.1" y="1166">0000+</text>
<text x="3592.0" y="1166">+</text>
<text x="3615.3" y="1166">000011C4</text>
<path d="M1304.0 1213H1911.9M1918.9 1213H2005.1M1918.9 1185H2005.1M2012.1 1213H2571.2M2578.2 1213H2664.4M2578.2 1185H2664.4M2671.4 1213H3802.0" stroke="#00ff00" stroke-width="2" fill="none"/>
<path d="M1911.9 1213L1917.9 1185M1914.9 1199.0L1917.9 1213M2006.1 1185L2012.1 1213M2006.1 1213L2009.1 1199.0M2571.2 1213L2577.2 1185M2574.2 1199.0L2577.2 1213M2665.4 1185L2671.4 1213M2665.4 1213L2668.4 1199.0" stroke="#00c800" stroke-width="2" fill="none"/>
<text x="1309.0" y="1206">00000000</text>
<text x="1919.9" y="1206">000010+</text>
<text x="2014.1" y="1206">00000000</text>
<text x="2579.2" y="1206">DEADBE+</text>
<text x="2673.4" y="1206">00000000</text>
</g>
<rect x="2008" y="258" width="2" height="1986" fill="#ff8080"/>
</svg>
<svg style="position:absolute;left:3470px;top:2008px" width="304" height="136" viewBox="3470 2008 304 136">
<defs>
<radialGradient id="spk" cx="50%" cy="50%" r="50%"><stop offset="0" stop-color="#fff8e0"/><stop offset="0.3" stop-color="#e0d0a8" stop-opacity="0.8"/><stop offset="1" stop-color="#000" stop-opacity="0"/></radialGradient>
<linearGradient id="k1" x1="0" y1="0" x2="1" y2="0"><stop offset="0" stop-color="#2a3024"/><stop offset="0.25" stop-color="#8a6a58"/><stop offset="0.45" stop-color="#e86a30"/><stop offset="0.75" stop-color="#f0d0c0"/><stop offset="1" stop-color="#f8f4f0"/></linearGradient>
<linearGradient id="k2" x1="0" y1="0" x2="1" y2="0"><stop offset="0" stop-color="#f4eeea"/><stop offset="0.25" stop-color="#ee7a40"/><stop offset="0.55" stop-color="#f06a30"/><stop offset="0.75" stop-color="#f2d8c8"/><stop offset="1" stop-color="#e83818"/></linearGradient>
<radialGradient id="glow" cx="50%" cy="50%" r="50%"><stop offset="0" stop-color="#6a4818" stop-opacity="0.9"/><stop offset="0.6" stop-color="#3a2808" stop-opacity="0.5"/><stop offset="1" stop-color="#000" stop-opacity="0"/></radialGradient>
<radialGradient id="water" cx="75%" cy="60%" r="60%"><stop offset="0" stop-color="#1c1c20"/><stop offset="1" stop-color="#0e0b0c"/></radialGradient>
</defs>
<rect x="3479" y="2016.5" width="284" height="119" rx="28" fill="url(#water)"/>
<ellipse cx="3548" cy="2108" rx="24" ry="24" fill="url(#glow)"/>
<g stroke="#8a8a90" stroke-width="1.6" fill="none" opacity="0.55">
<path d="M3612 2131c10-6 22-9 36-8"/><path d="M3650 2125c10-14 30-22 52-20"/><path d="M3705 2118c12-2 26-8 36-16"/>
<path d="M3716 2095c8-5 18-9 30-10"/><path d="M3722 2070c10-6 20-8 32-6"/><path d="M3648 2075c-4 10-2 22 6 30"/>
<path d="M3730 2043c8-4 16-10 22-16"/><path d="M3700 2098c-6-6-10-12-10-20"/>
</g>
<g transform="translate(3539,2023) rotate(25)">
<path d="M0 0C30 -3 75 -11 100 -9C114 -8 118 0 114 6C108 12 80 11 60 8C35 5 15 2 0 0Z" fill="url(#k1)"/>
<ellipse cx="58" cy="-2" rx="9" ry="5.5" fill="#e8602a"/><ellipse cx="82" cy="0" rx="7" ry="5" fill="#ec6c30"/><ellipse cx="38" cy="-1" rx="6" ry="3.5" fill="#d9581e"/>
<path d="M92 -8l8 -9 4 9z" fill="#e8e4e0"/><path d="M74 9l-2 12 10-9z" fill="#e0dcd8"/>
</g>
<g transform="translate(3671,2022) rotate(71.6)">
<path d="M0 0C25 -5 60 -9 85 -8C98 -7 102 0 98 6C88 10 60 9 40 6C20 4 8 2 0 0Z" fill="url(#k2)"/>
<ellipse cx="48" cy="-1" rx="10" ry="5.5" fill="#ea5a22"/><ellipse cx="86" cy="0" rx="9" ry="5.5" fill="#e63a18"/>
</g>
<g transform="translate(3712,2044) rotate(58)">
<path d="M-26 0C-18 -12 10 -14 24 -6C30 -2 30 4 24 8C10 14 -18 12 -26 0Z" fill="#e8782e"/>
<ellipse cx="-4" cy="-3" rx="9" ry="5" fill="#f2dcc8"/>
<path d="M14 8l14 16-18-8z" fill="#d86a26"/><path d="M-10 -10l-6 -10 12 6z" fill="#f0e0d0"/>
</g>
<g>
<circle cx="3579" cy="2069" r="7" fill="url(#spk)"/><circle cx="3653" cy="2088" r="7" fill="url(#spk)"/>
<circle cx="3705" cy="2076" r="6" fill="url(#spk)"/><circle cx="3735" cy="2107" r="8" fill="url(#spk)"/>
<path d="M3579 2063v12M3573 2069h12M3653 2082v12M3647 2088h12M3735 2100v14M3728 2107h14" stroke="#fff4d8" stroke-width="1" opacity="0.7"/>
</g>
<g fill="none" stroke="#dedede" stroke-width="2">
<path d="M3507 2027.5h29M3514 2023v9M3528 2023v9"/>
<path d="M3511 2036.5h21v9h-21z"/>
<path d="M3506 2045.5h31"/>
<path d="M3521.5 2033v13"/>
<path d="M3521 2046c-2 4-8 7-14 8M3522 2046c2 4 8 7 14 8"/>
</g>
<path d="M3510 2064l8-1c1 3 3 5 4 5s3-2 4-5l8 1 4 10-6 2v14h-20v-14l-6-2z" fill="#ffffff"/>
<path d="M3532 2106c-4-2-12-3-18-1c-8 3-10 9-3 11l10 2c5 1 4 4-1 5c-5 1-11 0-15-2l-3 5c6 3 14 4 21 2c9-2 11-9 3-12l-9-2c-4-1-3-3 1-4c4-1 9 0 12 1z" fill="#c9502c"/>
</svg>
</body></html>
